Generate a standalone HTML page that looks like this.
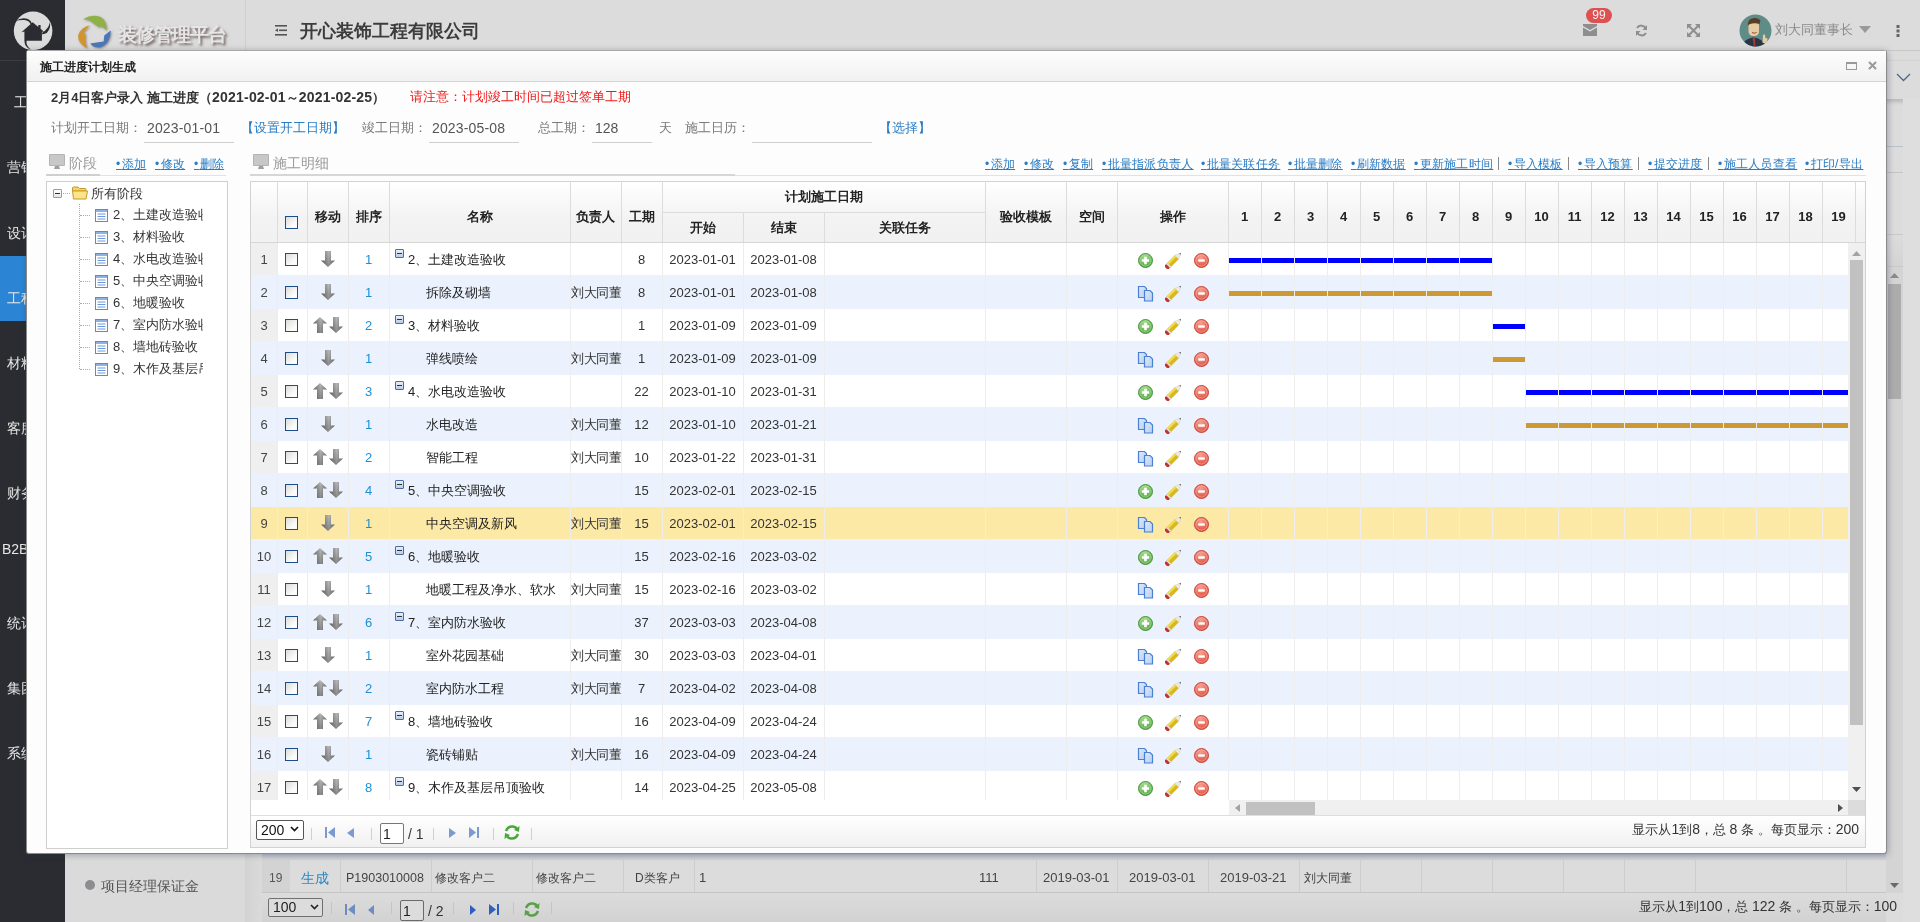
<!DOCTYPE html><html><head><meta charset="utf-8"><title>施工进度计划生成</title><style>
html,body{margin:0;padding:0;width:1920px;height:922px;overflow:hidden;background:#dcdcdc;font-family:"Liberation Sans", sans-serif;}
div{box-sizing:border-box;}
</style></head><body><div style="position:absolute;left:0;top:0;width:1920px;height:922px;overflow:hidden;will-change:transform">
<div style="position:absolute;left:0px;top:0px;width:65px;height:922px;background:#2a2c31;"></div>
<svg style="position:absolute;left:0;top:0" width="65" height="60" viewBox="0 0 65 60"><circle cx="33.1" cy="30.8" r="19.3" fill="#dcdcdc"/><path d="M15.2 21.2 Q22 16.5 28.5 19.2 Q31.5 20.8 32 24 L30.6 24.2 Q29 20.6 24.5 20 Q19.5 19.6 15.2 21.2 Z" fill="#2a2c31"/><path d="M32.7 22.3 L38.3 26.9 L38.3 25 L40.6 25 L40.6 28.8 L44 31.8 L41.9 31.8 L41.9 40.8 L26.6 40.8 Q25.6 45.5 30.8 49.6 Q24.6 47.6 24.4 40.8 L24.4 31.6 L21.4 32.2 Z" fill="#2a2c31"/><path d="M42.6 32.2 Q48 29.5 50 22.2 Q51 28 47 32.8 Q44.5 34.6 41.9 34.2 Z" fill="#2a2c31"/></svg>
<div style="position:absolute;left:0px;top:60px;width:65px;height:1px;background:#3b3d42;"></div>
<div style="position:absolute;left:0px;top:256px;width:65px;height:65px;background:#2b84d4;"></div>
<div style="position:absolute;left:4px;top:94.0px;width:61px;text-align:center;height:16px;line-height:16px;font-size:14px;color:#e6e6e6;font-weight:normal;white-space:nowrap;">工作台</div>
<div style="position:absolute;left:4px;top:159.0px;width:61px;text-align:center;height:16px;line-height:16px;font-size:14px;color:#e6e6e6;font-weight:normal;white-space:nowrap;">营销中心</div>
<div style="position:absolute;left:4px;top:225.0px;width:61px;text-align:center;height:16px;line-height:16px;font-size:14px;color:#e6e6e6;font-weight:normal;white-space:nowrap;">设计中心</div>
<div style="position:absolute;left:4px;top:290.0px;width:61px;text-align:center;height:16px;line-height:16px;font-size:14px;color:#e6e6e6;font-weight:normal;white-space:nowrap;">工程中心</div>
<div style="position:absolute;left:4px;top:355.0px;width:61px;text-align:center;height:16px;line-height:16px;font-size:14px;color:#e6e6e6;font-weight:normal;white-space:nowrap;">材料中心</div>
<div style="position:absolute;left:4px;top:420.0px;width:61px;text-align:center;height:16px;line-height:16px;font-size:14px;color:#e6e6e6;font-weight:normal;white-space:nowrap;">客服中心</div>
<div style="position:absolute;left:4px;top:485.0px;width:61px;text-align:center;height:16px;line-height:16px;font-size:14px;color:#e6e6e6;font-weight:normal;white-space:nowrap;">财务中心</div>
<div style="position:absolute;left:2px;top:541.0px;height:16px;line-height:16px;font-size:14px;color:#e6e6e6;font-weight:normal;white-space:nowrap;">B2B商城</div>
<div style="position:absolute;left:4px;top:615.0px;width:61px;text-align:center;height:16px;line-height:16px;font-size:14px;color:#e6e6e6;font-weight:normal;white-space:nowrap;">统计分析</div>
<div style="position:absolute;left:4px;top:680.0px;width:61px;text-align:center;height:16px;line-height:16px;font-size:14px;color:#e6e6e6;font-weight:normal;white-space:nowrap;">集团管理</div>
<div style="position:absolute;left:4px;top:745.0px;width:61px;text-align:center;height:16px;line-height:16px;font-size:14px;color:#e6e6e6;font-weight:normal;white-space:nowrap;">系统设置</div>
<div style="position:absolute;left:65px;top:0px;width:1855px;height:51px;background:#dcdcdc;"></div>
<div style="position:absolute;left:245px;top:0px;width:1px;height:51px;background:#cfcfcf;"></div>
<svg style="position:absolute;left:0;top:0;filter:drop-shadow(1px 1px 1px rgba(100,80,80,0.55))" width="120" height="52" viewBox="0 0 120 52"><path d="M83 19.2 Q92 13.8 100.5 17 Q106.8 20.5 106.6 30.4 Q104.5 28 102.5 27.2 L100 25.8 L99.6 27.6 L93.5 23.6 L90.8 21 Q87 19.4 83 19.2 Z" fill="#8fb246"/><path d="M89.7 25.2 Q80.5 27.5 78.3 35 Q77 43 87.3 48.2 Q85.2 44 85.4 38 L85.6 33.6 L82.6 33.4 Z" fill="#d1952f"/><path d="M90.2 43.6 Q93.5 48.2 100.5 47.4 Q110.2 44.5 111 30.6 Q107.6 32.8 104.3 35.6 L103.6 41.6 Q97 42.6 90.2 43.6 Z" fill="#4a78b6"/></svg>
<div style="position:absolute;left:118px;top:23px;height:24px;line-height:24px;font-size:19px;font-weight:bold;color:#e6e6e6;text-shadow:1.5px 2px 2.5px rgba(105,85,85,0.9);white-space:nowrap;letter-spacing:-1px">装修管理平台</div>
<svg style="position:absolute;left:275px;top:25px" width="13" height="11" viewBox="0 0 13 11"><rect x="0" y="0" width="12" height="1.6" fill="#555"/><rect x="4" y="4.5" width="8" height="1.6" fill="#555"/><rect x="0" y="9" width="12" height="1.6" fill="#555"/><path d="M0 5.3 L3 3.5 L3 7 Z" fill="#555"/></svg>
<div style="position:absolute;left:300px;top:19px;height:24px;line-height:24px;font-size:18px;font-weight:bold;color:#3c3c3c;white-space:nowrap">开心装饰工程有限公司</div>
<svg style="position:absolute;left:1583px;top:24px" width="14" height="12" viewBox="0 0 14 12"><path d="M0 0 H14 V2 L7 6 L0 2 Z" fill="#8e8e8e"/><path d="M0 3.5 L7 7.5 L14 3.5 V12 H0 Z" fill="#8e8e8e"/></svg>
<div style="position:absolute;left:1586px;top:8px;width:26px;height:15px;border-radius:8px;background:#dc5252;color:#f2f2f2;font-size:12px;line-height:15px;text-align:center">99</div>
<svg style="position:absolute;left:1635px;top:24px" width="13" height="13" viewBox="0 0 13 13"><path d="M11 5 A5 5 0 0 0 2 4" stroke="#8e8e8e" stroke-width="2" fill="none"/><path d="M12 1 L12 6 L7.5 6 Z" fill="#8e8e8e"/><path d="M2 8 A5 5 0 0 0 11 9" stroke="#8e8e8e" stroke-width="2" fill="none"/><path d="M1 12 L1 7 L5.5 7 Z" fill="#8e8e8e"/></svg>
<svg style="position:absolute;left:1687px;top:24px" width="13" height="13" viewBox="0 0 13 13"><path d="M1 1 L12 12 M12 1 L1 12" stroke="#8e8e8e" stroke-width="2"/><path d="M0 0 H5 L0 5 Z M13 0 H8 L13 5 Z M0 13 H5 L0 8 Z M13 13 H8 L13 8 Z" fill="#8e8e8e"/></svg>
<svg style="position:absolute;left:1739px;top:14px" width="33" height="33" viewBox="0 0 33 33"><defs><clipPath id="avc"><circle cx="16.5" cy="16.5" r="16"/></clipPath></defs><circle cx="16.5" cy="16.5" r="16" fill="#5f8c87"/><g clip-path="url(#avc)"><path d="M3 33 Q4 25 14 23.5 Q24 24 27 33 Z" fill="#2c3546"/><path d="M13.5 23.5 L15 33 L16.5 33 L15.8 23.5 Z" fill="#a83a30"/><rect x="9.5" y="7" width="10.5" height="15" rx="4.5" fill="#e6cca4"/><path d="M8.8 12 Q8.5 5 14 4.2 Q19 3.2 21.5 6.5 L20.5 10 Q15 8.5 10 10.5 Z" fill="#5a3b24"/><path d="M13 18.5 Q15 20 17.5 18.5" stroke="#a04040" stroke-width="1" fill="none"/><path d="M23.5 29 L24 21.5 Q25 19.5 26 21 L26.5 24 L28.5 24.5 L28 29 Z" fill="#e6cca4"/></g></svg>
<div style="position:absolute;left:1775px;top:21px;height:18px;line-height:18px;font-size:13px;color:#8a8a8a;white-space:nowrap">刘大同董事长</div>
<svg style="position:absolute;left:1859px;top:26px" width="12" height="7" viewBox="0 0 12 7"><path d="M0 0 H12 L6 7 Z" fill="#9a9a9a"/></svg>
<svg style="position:absolute;left:1896px;top:25px" width="4" height="12" viewBox="0 0 4 12"><rect x="0.5" y="0" width="3" height="3" fill="#666"/><rect x="0.5" y="4.5" width="3" height="3" fill="#666"/><rect x="0.5" y="9" width="3" height="3" fill="#666"/></svg>
<div style="position:absolute;left:65px;top:50px;width:1855px;height:1px;background:#c8c8c8;"></div>
<div style="position:absolute;left:1880px;top:60px;width:40px;height:39px;background:#dcdcdc;box-shadow:0 3px 4px rgba(0,0,0,0.16);border-top:1px solid #d2d2d2;"></div>
<svg style="position:absolute;left:1896px;top:73px" width="15" height="9" viewBox="0 0 15 9"><path d="M1 1 L7.5 7.5 L14 1" stroke="#4a6a8a" stroke-width="1.3" fill="none"/></svg>
<div style="position:absolute;left:1885px;top:146px;width:18px;height:1px;background:#b7c3cc;"></div>
<div style="position:absolute;left:1885px;top:172px;width:18px;height:1px;background:#c4c4c4;"></div>
<div style="position:absolute;left:1885px;top:234px;width:19px;height:33px;border:1px solid #c9c9c9;background:linear-gradient(#dcdcdc,#d4d4d4);"></div>
<div style="position:absolute;left:1886px;top:267px;width:17px;height:626px;background:#d4d4d4;"></div>
<div style="position:absolute;left:1888px;top:284px;width:13px;height:115px;background:#acacac;"></div>
<svg style="position:absolute;left:1890px;top:273px" width="9" height="5"><path d="M0 5 L4.5 0 L9 5 Z" fill="#8a8a8a"/></svg>
<svg style="position:absolute;left:1890px;top:883px" width="9" height="5"><path d="M0 0 L4.5 5 L9 0 Z" fill="#6a6a6a"/></svg>
<div style="position:absolute;left:1903px;top:99px;width:17px;height:823px;background:#dedede;"></div>
<div style="position:absolute;left:65px;top:854px;width:180px;height:68px;background:#dadada;"></div>
<div style="position:absolute;left:85px;top:880px;width:10px;height:10px;border-radius:5px;background:#8b8d90"></div>
<div style="position:absolute;left:101px;top:878.0px;height:16px;line-height:16px;font-size:14px;color:#555;font-weight:normal;white-space:nowrap;">项目经理保证金</div>
<div style="position:absolute;left:245px;top:853px;width:17px;height:69px;background:linear-gradient(90deg,#d2d2d2,#dadada);"></div>
<div style="position:absolute;left:262px;top:853px;width:1624px;height:39px;background:#dcdcdc;"></div>
<div style="position:absolute;left:262px;top:853px;width:1624px;height:7px;background:linear-gradient(#b9bfcb,#d3d5da);"></div>
<div style="position:absolute;left:262px;top:860px;width:28px;height:32px;background:#d3d3d3;"></div>
<div style="position:absolute;left:340px;top:860px;width:1px;height:32px;background:#cdcdcd;"></div>
<div style="position:absolute;left:431px;top:860px;width:1px;height:32px;background:#cdcdcd;"></div>
<div style="position:absolute;left:532px;top:860px;width:1px;height:32px;background:#cdcdcd;"></div>
<div style="position:absolute;left:623px;top:860px;width:1px;height:32px;background:#cdcdcd;"></div>
<div style="position:absolute;left:694px;top:860px;width:1px;height:32px;background:#cdcdcd;"></div>
<div style="position:absolute;left:1036px;top:860px;width:1px;height:32px;background:#cdcdcd;"></div>
<div style="position:absolute;left:1117px;top:860px;width:1px;height:32px;background:#cdcdcd;"></div>
<div style="position:absolute;left:1208px;top:860px;width:1px;height:32px;background:#cdcdcd;"></div>
<div style="position:absolute;left:1299px;top:860px;width:1px;height:32px;background:#cdcdcd;"></div>
<div style="position:absolute;left:1360px;top:860px;width:1px;height:32px;background:#cdcdcd;"></div>
<div style="position:absolute;left:1421px;top:860px;width:1px;height:32px;background:#cdcdcd;"></div>
<div style="position:absolute;left:1492px;top:860px;width:1px;height:32px;background:#cdcdcd;"></div>
<div style="position:absolute;left:1563px;top:860px;width:1px;height:32px;background:#cdcdcd;"></div>
<div style="position:absolute;left:1624px;top:860px;width:1px;height:32px;background:#cdcdcd;"></div>
<div style="position:absolute;left:1695px;top:860px;width:1px;height:32px;background:#cdcdcd;"></div>
<div style="position:absolute;left:1846px;top:860px;width:1px;height:32px;background:#cdcdcd;"></div>
<div style="position:absolute;left:262px;top:892px;width:1624px;height:1px;background:#c4c4c4;"></div>
<div style="position:absolute;left:262px;top:893px;width:1624px;height:29px;background:linear-gradient(#dcdcdc,#d2d2d2);"></div>
<div style="position:absolute;left:269px;top:870.0px;height:16px;line-height:16px;font-size:12px;color:#555;font-weight:normal;white-space:nowrap;">19</div>
<div style="position:absolute;left:301px;top:870.0px;height:16px;line-height:16px;font-size:14px;color:#2a8ac0;font-weight:normal;white-space:nowrap;">生成</div>
<div style="position:absolute;left:346px;top:870.0px;height:16px;line-height:16px;font-size:12.5px;color:#444;font-weight:normal;white-space:nowrap;">P1903010008</div>
<div style="position:absolute;left:435px;top:870.0px;height:16px;line-height:16px;font-size:12px;color:#444;font-weight:normal;white-space:nowrap;">修改客户二</div>
<div style="position:absolute;left:536px;top:870.0px;height:16px;line-height:16px;font-size:12px;color:#444;font-weight:normal;white-space:nowrap;">修改客户二</div>
<div style="position:absolute;left:635px;top:870.0px;height:16px;line-height:16px;font-size:12px;color:#444;font-weight:normal;white-space:nowrap;">D类客户</div>
<div style="position:absolute;left:699px;top:870.0px;height:16px;line-height:16px;font-size:13px;color:#444;font-weight:normal;white-space:nowrap;">1</div>
<div style="position:absolute;left:979px;top:870.0px;height:16px;line-height:16px;font-size:13px;color:#444;font-weight:normal;white-space:nowrap;">111</div>
<div style="position:absolute;left:1043px;top:870.0px;height:16px;line-height:16px;font-size:13px;color:#444;font-weight:normal;white-space:nowrap;">2019-03-01</div>
<div style="position:absolute;left:1129px;top:870.0px;height:16px;line-height:16px;font-size:13px;color:#444;font-weight:normal;white-space:nowrap;">2019-03-01</div>
<div style="position:absolute;left:1220px;top:870.0px;height:16px;line-height:16px;font-size:13px;color:#444;font-weight:normal;white-space:nowrap;">2019-03-21</div>
<div style="position:absolute;left:1304px;top:870.0px;height:16px;line-height:16px;font-size:12px;color:#444;font-weight:normal;white-space:nowrap;">刘大同董</div>
<div style="position:absolute;left:268px;top:898px;width:55px;height:19px;border:1px solid #707070;border-radius:2px;background:#dcdcdc;font-size:14px;line-height:17px;padding-left:4px;color:#222">100</div>
<svg style="position:absolute;left:310px;top:904px" width="9" height="6"><path d="M1 1 L4.5 4.5 L8 1" stroke="#222" stroke-width="1.6" fill="none"/></svg>
<div style="position:absolute;right:23px;top:898.0px;height:16px;line-height:16px;font-size:13px;color:#333;font-weight:normal;white-space:nowrap;">显示从<span style="font-size:14px">1</span>到<span style="font-size:14px">100</span>，总 <span style="font-size:14px">122</span> 条 。每页显示：<span style="font-size:14px">100</span></div>
<div style="position:absolute;left:331px;top:902px;width:1px;height:12px;background:#c4c4c4;"></div>
<div style="position:absolute;left:391px;top:902px;width:1px;height:12px;background:#c4c4c4;"></div>
<div style="position:absolute;left:453px;top:902px;width:1px;height:12px;background:#c4c4c4;"></div>
<div style="position:absolute;left:513px;top:902px;width:1px;height:12px;background:#c4c4c4;"></div>
<div style="position:absolute;left:551px;top:902px;width:1px;height:12px;background:#c4c4c4;"></div>
<svg style="position:absolute;left:345px;top:904px" width="10" height="11"><rect x="0" y="0" width="2" height="11" fill="#6f8cc0"/><path d="M10 0 V11 L3 5.5 Z" fill="#6f8cc0"/></svg>
<svg style="position:absolute;left:368px;top:905px" width="6" height="10"><path d="M6 0 V10 L0 5 Z" fill="#6f8cc0"/></svg>
<div style="position:absolute;left:400px;top:900px;width:24px;height:21px;border:1px solid #6a6a6a;border-radius:2px;background:#dcdcdc;font-size:14px;line-height:21px;padding-left:2px;color:#222">1</div>
<div style="position:absolute;left:428px;top:903.0px;height:16px;line-height:16px;font-size:14px;color:#333;font-weight:normal;white-space:nowrap;">/ 2</div>
<svg style="position:absolute;left:470px;top:905px" width="6" height="10"><path d="M0 0 V10 L6 5 Z" fill="#2e5fc0"/></svg>
<svg style="position:absolute;left:489px;top:904px" width="10" height="11"><path d="M0 0 V11 L7 5.5 Z" fill="#2e5fc0"/><rect x="8" y="0" width="2" height="11" fill="#2e5fc0"/></svg>
<svg style="position:absolute;left:524px;top:902px" width="16" height="15" viewBox="0 0 16 15"><path d="M2 6 Q4 1 9 1.5 Q12 2 13 4" stroke="#5aa048" stroke-width="2.6" fill="none"/><path d="M15.5 1 L15 7 L10 5 Z" fill="#5aa048"/><path d="M14 9 Q12 14 7 13.5 Q4 13 3 11" stroke="#5aa048" stroke-width="2.6" fill="none"/><path d="M0.5 14 L1 8 L6 10 Z" fill="#5aa048"/></svg>
<div style="position:absolute;left:26px;top:50px;width:1861px;height:804px;background:#fdfdfd;border:1px solid #8a8a8a;border-top-color:#a8a8a8;border-radius:3px;box-shadow:1px 1px 6px rgba(40,50,80,0.35);"></div>
<div style="position:absolute;left:27px;top:51px;width:1859px;height:30px;background:linear-gradient(#fdfdfd,#f1f1f1);"></div>
<div style="position:absolute;left:27px;top:81px;width:1859px;height:1px;background:#d4d4d4;"></div>
<div style="position:absolute;left:40px;top:59.0px;height:16px;line-height:16px;font-size:12px;color:#222;font-weight:bold;white-space:nowrap;">施工进度计划生成</div>
<div style="position:absolute;left:1846px;top:62px;width:11px;height:8px;border:1px solid #999;border-top-width:2px;"></div>
<svg style="position:absolute;left:1868px;top:61px" width="9" height="9"><path d="M1.5 1.5 L7.5 7.5 M7.5 1.5 L1.5 7.5" stroke="#999" stroke-width="2" stroke-linecap="round"/></svg>
<div style="position:absolute;left:51px;top:89.0px;height:16px;line-height:16px;font-size:13px;color:#333;font-weight:bold;white-space:nowrap;">2月4日客户录入 施工进度（<span style="font-size:14px;letter-spacing:0.2px">2021-02-01</span>～<span style="font-size:14px;letter-spacing:0.2px">2021-02-25</span>）</div>
<div style="position:absolute;left:410px;top:89.0px;height:16px;line-height:16px;font-size:13px;color:#f21818;font-weight:normal;white-space:nowrap;">请注意：计划竣工时间已超过签单工期</div>
<div style="position:absolute;left:51px;top:120.0px;height:16px;line-height:16px;font-size:13px;color:#7a7a7a;font-weight:normal;white-space:nowrap;">计划开工日期：</div>
<div style="position:absolute;left:147px;top:120.0px;height:16px;line-height:16px;font-size:14px;color:#555;font-weight:normal;white-space:nowrap;letter-spacing:0.15px">2023-01-01</div>
<div style="position:absolute;left:144px;top:142px;width:90px;height:1px;background:#cfcfcf;"></div>
<div style="position:absolute;left:241px;top:120.0px;height:16px;line-height:16px;font-size:13px;color:#2a7cc4;font-weight:normal;white-space:nowrap;">【设置开工日期】</div>
<div style="position:absolute;left:362px;top:120.0px;height:16px;line-height:16px;font-size:13px;color:#7a7a7a;font-weight:normal;white-space:nowrap;">竣工日期：</div>
<div style="position:absolute;left:432px;top:120.0px;height:16px;line-height:16px;font-size:14px;color:#555;font-weight:normal;white-space:nowrap;letter-spacing:0.15px">2023-05-08</div>
<div style="position:absolute;left:429px;top:142px;width:90px;height:1px;background:#cfcfcf;"></div>
<div style="position:absolute;left:538px;top:120.0px;height:16px;line-height:16px;font-size:13px;color:#7a7a7a;font-weight:normal;white-space:nowrap;">总工期：</div>
<div style="position:absolute;left:595px;top:120.0px;height:16px;line-height:16px;font-size:14px;color:#555;font-weight:normal;white-space:nowrap;">128</div>
<div style="position:absolute;left:592px;top:142px;width:60px;height:1px;background:#cfcfcf;"></div>
<div style="position:absolute;left:659px;top:120.0px;height:16px;line-height:16px;font-size:13px;color:#7a7a7a;font-weight:normal;white-space:nowrap;">天</div>
<div style="position:absolute;left:685px;top:120.0px;height:16px;line-height:16px;font-size:13px;color:#7a7a7a;font-weight:normal;white-space:nowrap;">施工日历：</div>
<div style="position:absolute;left:752px;top:142px;width:120px;height:1px;background:#cfcfcf;"></div>
<div style="position:absolute;left:879px;top:120.0px;height:16px;line-height:16px;font-size:13px;color:#2a7cc4;font-weight:normal;white-space:nowrap;">【选择】</div>
<svg style="position:absolute;left:49px;top:154px" width="16" height="16" viewBox="0 0 16 16"><rect x="0" y="0" width="16" height="12" rx="1" fill="#b4b4b4"/><rect x="1" y="1" width="14" height="10" fill="#c8c8c8"/><path d="M6 12 H10 L11 15 H5 Z" fill="#a0a0a0"/></svg>
<div style="position:absolute;left:69px;top:155.0px;height:16px;line-height:16px;font-size:14px;color:#999;font-weight:normal;white-space:nowrap;">阶段</div>
<div style="position:absolute;left:116px;top:156px;height:16px;line-height:16px;font-size:12px;color:#2a7cc4;white-space:nowrap;text-decoration:underline;letter-spacing:0.3px"><span style="letter-spacing:1.3px">•</span>添加</div>
<div style="position:absolute;left:155px;top:156px;height:16px;line-height:16px;font-size:12px;color:#2a7cc4;white-space:nowrap;text-decoration:underline;letter-spacing:0.3px"><span style="letter-spacing:1.3px">•</span>修改</div>
<div style="position:absolute;left:194px;top:156px;height:16px;line-height:16px;font-size:12px;color:#2a7cc4;white-space:nowrap;text-decoration:underline;letter-spacing:0.3px"><span style="letter-spacing:1.3px">•</span>删除</div>
<div style="position:absolute;left:46px;top:174px;width:54px;height:2px;background:#cfcfcf;"></div>
<div style="position:absolute;left:100px;top:175px;width:126px;height:1px;background:#e2e2e2;"></div>
<svg style="position:absolute;left:253px;top:154px" width="16" height="16" viewBox="0 0 16 16"><rect x="0" y="0" width="16" height="12" rx="1" fill="#b4b4b4"/><rect x="1" y="1" width="14" height="10" fill="#c8c8c8"/><path d="M6 12 H10 L11 15 H5 Z" fill="#a0a0a0"/></svg>
<div style="position:absolute;left:273px;top:155.0px;height:16px;line-height:16px;font-size:14px;color:#999;font-weight:normal;white-space:nowrap;">施工明细</div>
<div style="position:absolute;left:250px;top:174px;width:485px;height:2px;background:#d6d6d6;"></div>
<div style="position:absolute;left:735px;top:175px;width:1131px;height:1px;background:#e2e2e2;"></div>
<div style="position:absolute;left:985px;top:156px;height:16px;line-height:16px;font-size:12px;color:#2a7cc4;white-space:nowrap;text-decoration:underline;letter-spacing:0.3px"><span style="letter-spacing:1.3px">•</span>添加</div>
<div style="position:absolute;left:1024px;top:156px;height:16px;line-height:16px;font-size:12px;color:#2a7cc4;white-space:nowrap;text-decoration:underline;letter-spacing:0.3px"><span style="letter-spacing:1.3px">•</span>修改</div>
<div style="position:absolute;left:1063px;top:156px;height:16px;line-height:16px;font-size:12px;color:#2a7cc4;white-space:nowrap;text-decoration:underline;letter-spacing:0.3px"><span style="letter-spacing:1.3px">•</span>复制</div>
<div style="position:absolute;left:1102px;top:156px;height:16px;line-height:16px;font-size:12px;color:#2a7cc4;white-space:nowrap;text-decoration:underline;letter-spacing:0.3px"><span style="letter-spacing:1.3px">•</span>批量指派负责人</div>
<div style="position:absolute;left:1201px;top:156px;height:16px;line-height:16px;font-size:12px;color:#2a7cc4;white-space:nowrap;text-decoration:underline;letter-spacing:0.3px"><span style="letter-spacing:1.3px">•</span>批量关联任务</div>
<div style="position:absolute;left:1288px;top:156px;height:16px;line-height:16px;font-size:12px;color:#2a7cc4;white-space:nowrap;text-decoration:underline;letter-spacing:0.3px"><span style="letter-spacing:1.3px">•</span>批量删除</div>
<div style="position:absolute;left:1351px;top:156px;height:16px;line-height:16px;font-size:12px;color:#2a7cc4;white-space:nowrap;text-decoration:underline;letter-spacing:0.3px"><span style="letter-spacing:1.3px">•</span>刷新数据</div>
<div style="position:absolute;left:1414px;top:156px;height:16px;line-height:16px;font-size:12px;color:#2a7cc4;white-space:nowrap;text-decoration:underline;letter-spacing:0.3px"><span style="letter-spacing:1.3px">•</span>更新施工时间</div>
<div style="position:absolute;left:1508px;top:156px;height:16px;line-height:16px;font-size:12px;color:#2a7cc4;white-space:nowrap;text-decoration:underline;letter-spacing:0.3px"><span style="letter-spacing:1.3px">•</span>导入模板</div>
<div style="position:absolute;left:1578px;top:156px;height:16px;line-height:16px;font-size:12px;color:#2a7cc4;white-space:nowrap;text-decoration:underline;letter-spacing:0.3px"><span style="letter-spacing:1.3px">•</span>导入预算</div>
<div style="position:absolute;left:1648px;top:156px;height:16px;line-height:16px;font-size:12px;color:#2a7cc4;white-space:nowrap;text-decoration:underline;letter-spacing:0.3px"><span style="letter-spacing:1.3px">•</span>提交进度</div>
<div style="position:absolute;left:1718px;top:156px;height:16px;line-height:16px;font-size:12px;color:#2a7cc4;white-space:nowrap;text-decoration:underline;letter-spacing:0.3px"><span style="letter-spacing:1.3px">•</span>施工人员查看</div>
<div style="position:absolute;left:1805px;top:156px;height:16px;line-height:16px;font-size:12px;color:#2a7cc4;white-space:nowrap;text-decoration:underline;letter-spacing:0.3px"><span style="letter-spacing:1.3px">•</span>打印/导出</div>
<div style="position:absolute;left:1498px;top:157px;width:1px;height:13px;background:#888;"></div>
<div style="position:absolute;left:1568px;top:157px;width:1px;height:13px;background:#888;"></div>
<div style="position:absolute;left:1638px;top:157px;width:1px;height:13px;background:#888;"></div>
<div style="position:absolute;left:1708px;top:157px;width:1px;height:13px;background:#888;"></div>
<div style="position:absolute;left:46px;top:181px;width:182px;height:668px;border:1px solid #cfcfcf;background:#fff;"></div>
<div style="position:absolute;left:53px;top:189px;width:9px;height:9px;border:1px solid #9a9a9a;border-radius:1px;background:linear-gradient(#fff,#e6e6e6)"><div style="position:absolute;left:1px;top:3px;width:5px;height:1px;background:#333"></div></div>
<div style="position:absolute;left:63px;top:193px;width:7px;border-top:1px dotted #aaa"></div>
<svg style="position:absolute;left:72px;top:186px" width="16" height="14" viewBox="0 0 16 14"><path d="M0.5 2 Q0.5 1 1.5 1 H6 L7.5 2.5 H13 Q14 2.5 14 3.5 V5 H0.5 Z" fill="#f3d46a" stroke="#c89a2a" stroke-width="1"/><path d="M0.5 5 H15.5 L14 13 H1.5 Z" fill="#fbe48a" stroke="#c89a2a" stroke-width="1"/></svg>
<div style="position:absolute;left:91px;top:186.0px;height:16px;line-height:16px;font-size:13px;color:#333;font-weight:normal;white-space:nowrap;">所有阶段</div>
<div style="position:absolute;left:79px;top:204px;height:165px;border-left:1px dotted #aaa"></div>
<div style="position:absolute;left:80px;top:215px;width:10px;border-top:1px dotted #aaa"></div>
<svg style="position:absolute;left:95px;top:209px" width="13" height="13" viewBox="0 0 13 13"><rect x="0.5" y="0.5" width="12" height="12" fill="#fff" stroke="#5a8ad0"/><rect x="1" y="1" width="11" height="2" fill="#8fb2e4"/><path d="M2.5 5 H10.5 M2.5 7.5 H10.5 M2.5 10 H10.5" stroke="#6a98d8" stroke-width="1"/></svg>
<div style="position:absolute;left:113px;top:207px;width:90px;overflow:hidden;height:16px;line-height:16px;font-size:13px;color:#333;white-space:nowrap">2、土建改造验收</div>
<div style="position:absolute;left:80px;top:237px;width:10px;border-top:1px dotted #aaa"></div>
<svg style="position:absolute;left:95px;top:231px" width="13" height="13" viewBox="0 0 13 13"><rect x="0.5" y="0.5" width="12" height="12" fill="#fff" stroke="#5a8ad0"/><rect x="1" y="1" width="11" height="2" fill="#8fb2e4"/><path d="M2.5 5 H10.5 M2.5 7.5 H10.5 M2.5 10 H10.5" stroke="#6a98d8" stroke-width="1"/></svg>
<div style="position:absolute;left:113px;top:229px;width:90px;overflow:hidden;height:16px;line-height:16px;font-size:13px;color:#333;white-space:nowrap">3、材料验收</div>
<div style="position:absolute;left:80px;top:259px;width:10px;border-top:1px dotted #aaa"></div>
<svg style="position:absolute;left:95px;top:253px" width="13" height="13" viewBox="0 0 13 13"><rect x="0.5" y="0.5" width="12" height="12" fill="#fff" stroke="#5a8ad0"/><rect x="1" y="1" width="11" height="2" fill="#8fb2e4"/><path d="M2.5 5 H10.5 M2.5 7.5 H10.5 M2.5 10 H10.5" stroke="#6a98d8" stroke-width="1"/></svg>
<div style="position:absolute;left:113px;top:251px;width:90px;overflow:hidden;height:16px;line-height:16px;font-size:13px;color:#333;white-space:nowrap">4、水电改造验收</div>
<div style="position:absolute;left:80px;top:281px;width:10px;border-top:1px dotted #aaa"></div>
<svg style="position:absolute;left:95px;top:275px" width="13" height="13" viewBox="0 0 13 13"><rect x="0.5" y="0.5" width="12" height="12" fill="#fff" stroke="#5a8ad0"/><rect x="1" y="1" width="11" height="2" fill="#8fb2e4"/><path d="M2.5 5 H10.5 M2.5 7.5 H10.5 M2.5 10 H10.5" stroke="#6a98d8" stroke-width="1"/></svg>
<div style="position:absolute;left:113px;top:273px;width:90px;overflow:hidden;height:16px;line-height:16px;font-size:13px;color:#333;white-space:nowrap">5、中央空调验收</div>
<div style="position:absolute;left:80px;top:303px;width:10px;border-top:1px dotted #aaa"></div>
<svg style="position:absolute;left:95px;top:297px" width="13" height="13" viewBox="0 0 13 13"><rect x="0.5" y="0.5" width="12" height="12" fill="#fff" stroke="#5a8ad0"/><rect x="1" y="1" width="11" height="2" fill="#8fb2e4"/><path d="M2.5 5 H10.5 M2.5 7.5 H10.5 M2.5 10 H10.5" stroke="#6a98d8" stroke-width="1"/></svg>
<div style="position:absolute;left:113px;top:295px;width:90px;overflow:hidden;height:16px;line-height:16px;font-size:13px;color:#333;white-space:nowrap">6、地暖验收</div>
<div style="position:absolute;left:80px;top:325px;width:10px;border-top:1px dotted #aaa"></div>
<svg style="position:absolute;left:95px;top:319px" width="13" height="13" viewBox="0 0 13 13"><rect x="0.5" y="0.5" width="12" height="12" fill="#fff" stroke="#5a8ad0"/><rect x="1" y="1" width="11" height="2" fill="#8fb2e4"/><path d="M2.5 5 H10.5 M2.5 7.5 H10.5 M2.5 10 H10.5" stroke="#6a98d8" stroke-width="1"/></svg>
<div style="position:absolute;left:113px;top:317px;width:90px;overflow:hidden;height:16px;line-height:16px;font-size:13px;color:#333;white-space:nowrap">7、室内防水验收</div>
<div style="position:absolute;left:80px;top:347px;width:10px;border-top:1px dotted #aaa"></div>
<svg style="position:absolute;left:95px;top:341px" width="13" height="13" viewBox="0 0 13 13"><rect x="0.5" y="0.5" width="12" height="12" fill="#fff" stroke="#5a8ad0"/><rect x="1" y="1" width="11" height="2" fill="#8fb2e4"/><path d="M2.5 5 H10.5 M2.5 7.5 H10.5 M2.5 10 H10.5" stroke="#6a98d8" stroke-width="1"/></svg>
<div style="position:absolute;left:113px;top:339px;width:90px;overflow:hidden;height:16px;line-height:16px;font-size:13px;color:#333;white-space:nowrap">8、墙地砖验收</div>
<div style="position:absolute;left:80px;top:369px;width:10px;border-top:1px dotted #aaa"></div>
<svg style="position:absolute;left:95px;top:363px" width="13" height="13" viewBox="0 0 13 13"><rect x="0.5" y="0.5" width="12" height="12" fill="#fff" stroke="#5a8ad0"/><rect x="1" y="1" width="11" height="2" fill="#8fb2e4"/><path d="M2.5 5 H10.5 M2.5 7.5 H10.5 M2.5 10 H10.5" stroke="#6a98d8" stroke-width="1"/></svg>
<div style="position:absolute;left:113px;top:361px;width:90px;overflow:hidden;height:16px;line-height:16px;font-size:13px;color:#333;white-space:nowrap">9、木作及基层吊顶验收</div>
<div style="position:absolute;left:250px;top:181px;width:1616px;height:667px;border:1px solid #d2d2d2;background:#fff;"></div>
<div style="position:absolute;left:251px;top:182px;width:1614px;height:60px;background:linear-gradient(#ffffff 0%,#f3f3f3 60%,#f1f1f1 100%);"></div>
<div style="position:absolute;left:277px;top:182px;width:1px;height:60px;background:#dcdcdc;"></div>
<div style="position:absolute;left:307px;top:182px;width:1px;height:60px;background:#dcdcdc;"></div>
<div style="position:absolute;left:348px;top:182px;width:1px;height:60px;background:#dcdcdc;"></div>
<div style="position:absolute;left:389px;top:182px;width:1px;height:60px;background:#dcdcdc;"></div>
<div style="position:absolute;left:570px;top:182px;width:1px;height:60px;background:#dcdcdc;"></div>
<div style="position:absolute;left:621px;top:182px;width:1px;height:60px;background:#dcdcdc;"></div>
<div style="position:absolute;left:662px;top:182px;width:1px;height:60px;background:#dcdcdc;"></div>
<div style="position:absolute;left:743px;top:212px;width:1px;height:30px;background:#dcdcdc;"></div>
<div style="position:absolute;left:824px;top:212px;width:1px;height:30px;background:#dcdcdc;"></div>
<div style="position:absolute;left:985px;top:182px;width:1px;height:60px;background:#dcdcdc;"></div>
<div style="position:absolute;left:1066px;top:182px;width:1px;height:60px;background:#dcdcdc;"></div>
<div style="position:absolute;left:1117px;top:182px;width:1px;height:60px;background:#dcdcdc;"></div>
<div style="position:absolute;left:1228px;top:182px;width:1px;height:60px;background:#dcdcdc;"></div>
<div style="position:absolute;left:1261px;top:182px;width:1px;height:60px;background:#dcdcdc;"></div>
<div style="position:absolute;left:1294px;top:182px;width:1px;height:60px;background:#dcdcdc;"></div>
<div style="position:absolute;left:1327px;top:182px;width:1px;height:60px;background:#dcdcdc;"></div>
<div style="position:absolute;left:1360px;top:182px;width:1px;height:60px;background:#dcdcdc;"></div>
<div style="position:absolute;left:1393px;top:182px;width:1px;height:60px;background:#dcdcdc;"></div>
<div style="position:absolute;left:1426px;top:182px;width:1px;height:60px;background:#dcdcdc;"></div>
<div style="position:absolute;left:1459px;top:182px;width:1px;height:60px;background:#dcdcdc;"></div>
<div style="position:absolute;left:1492px;top:182px;width:1px;height:60px;background:#dcdcdc;"></div>
<div style="position:absolute;left:1525px;top:182px;width:1px;height:60px;background:#dcdcdc;"></div>
<div style="position:absolute;left:1558px;top:182px;width:1px;height:60px;background:#dcdcdc;"></div>
<div style="position:absolute;left:1591px;top:182px;width:1px;height:60px;background:#dcdcdc;"></div>
<div style="position:absolute;left:1624px;top:182px;width:1px;height:60px;background:#dcdcdc;"></div>
<div style="position:absolute;left:1657px;top:182px;width:1px;height:60px;background:#dcdcdc;"></div>
<div style="position:absolute;left:1690px;top:182px;width:1px;height:60px;background:#dcdcdc;"></div>
<div style="position:absolute;left:1723px;top:182px;width:1px;height:60px;background:#dcdcdc;"></div>
<div style="position:absolute;left:1756px;top:182px;width:1px;height:60px;background:#dcdcdc;"></div>
<div style="position:absolute;left:1789px;top:182px;width:1px;height:60px;background:#dcdcdc;"></div>
<div style="position:absolute;left:1822px;top:182px;width:1px;height:60px;background:#dcdcdc;"></div>
<div style="position:absolute;left:1855px;top:182px;width:1px;height:60px;background:#dcdcdc;"></div>
<div style="position:absolute;left:662px;top:212px;width:323px;height:1px;background:#dcdcdc;"></div>
<div style="position:absolute;left:251px;top:242px;width:1614px;height:1px;background:#d6d6d6;"></div>
<div style="position:absolute;left:307px;top:209.0px;width:41px;text-align:center;height:16px;line-height:16px;font-size:13px;color:#222;font-weight:bold;white-space:nowrap;">移动</div>
<div style="position:absolute;left:348px;top:209.0px;width:41px;text-align:center;height:16px;line-height:16px;font-size:13px;color:#222;font-weight:bold;white-space:nowrap;">排序</div>
<div style="position:absolute;left:389px;top:209.0px;width:181px;text-align:center;height:16px;line-height:16px;font-size:13px;color:#222;font-weight:bold;white-space:nowrap;">名称</div>
<div style="position:absolute;left:570px;top:209.0px;width:51px;text-align:center;height:16px;line-height:16px;font-size:13px;color:#222;font-weight:bold;white-space:nowrap;">负责人</div>
<div style="position:absolute;left:621px;top:209.0px;width:41px;text-align:center;height:16px;line-height:16px;font-size:13px;color:#222;font-weight:bold;white-space:nowrap;">工期</div>
<div style="position:absolute;left:662px;top:189.0px;width:323px;text-align:center;height:16px;line-height:16px;font-size:13px;color:#222;font-weight:bold;white-space:nowrap;">计划施工日期</div>
<div style="position:absolute;left:662px;top:220.0px;width:81px;text-align:center;height:16px;line-height:16px;font-size:13px;color:#222;font-weight:bold;white-space:nowrap;">开始</div>
<div style="position:absolute;left:743px;top:220.0px;width:81px;text-align:center;height:16px;line-height:16px;font-size:13px;color:#222;font-weight:bold;white-space:nowrap;">结束</div>
<div style="position:absolute;left:824px;top:220.0px;width:161px;text-align:center;height:16px;line-height:16px;font-size:13px;color:#222;font-weight:bold;white-space:nowrap;">关联任务</div>
<div style="position:absolute;left:985px;top:209.0px;width:81px;text-align:center;height:16px;line-height:16px;font-size:13px;color:#222;font-weight:bold;white-space:nowrap;">验收模板</div>
<div style="position:absolute;left:1066px;top:209.0px;width:51px;text-align:center;height:16px;line-height:16px;font-size:13px;color:#222;font-weight:bold;white-space:nowrap;">空间</div>
<div style="position:absolute;left:1117px;top:209.0px;width:111px;text-align:center;height:16px;line-height:16px;font-size:13px;color:#222;font-weight:bold;white-space:nowrap;">操作</div>
<div style="position:absolute;left:1228px;top:209.0px;width:33px;text-align:center;height:16px;line-height:16px;font-size:13px;color:#222;font-weight:bold;white-space:nowrap;">1</div>
<div style="position:absolute;left:1261px;top:209.0px;width:33px;text-align:center;height:16px;line-height:16px;font-size:13px;color:#222;font-weight:bold;white-space:nowrap;">2</div>
<div style="position:absolute;left:1294px;top:209.0px;width:33px;text-align:center;height:16px;line-height:16px;font-size:13px;color:#222;font-weight:bold;white-space:nowrap;">3</div>
<div style="position:absolute;left:1327px;top:209.0px;width:33px;text-align:center;height:16px;line-height:16px;font-size:13px;color:#222;font-weight:bold;white-space:nowrap;">4</div>
<div style="position:absolute;left:1360px;top:209.0px;width:33px;text-align:center;height:16px;line-height:16px;font-size:13px;color:#222;font-weight:bold;white-space:nowrap;">5</div>
<div style="position:absolute;left:1393px;top:209.0px;width:33px;text-align:center;height:16px;line-height:16px;font-size:13px;color:#222;font-weight:bold;white-space:nowrap;">6</div>
<div style="position:absolute;left:1426px;top:209.0px;width:33px;text-align:center;height:16px;line-height:16px;font-size:13px;color:#222;font-weight:bold;white-space:nowrap;">7</div>
<div style="position:absolute;left:1459px;top:209.0px;width:33px;text-align:center;height:16px;line-height:16px;font-size:13px;color:#222;font-weight:bold;white-space:nowrap;">8</div>
<div style="position:absolute;left:1492px;top:209.0px;width:33px;text-align:center;height:16px;line-height:16px;font-size:13px;color:#222;font-weight:bold;white-space:nowrap;">9</div>
<div style="position:absolute;left:1525px;top:209.0px;width:33px;text-align:center;height:16px;line-height:16px;font-size:13px;color:#222;font-weight:bold;white-space:nowrap;">10</div>
<div style="position:absolute;left:1558px;top:209.0px;width:33px;text-align:center;height:16px;line-height:16px;font-size:13px;color:#222;font-weight:bold;white-space:nowrap;">11</div>
<div style="position:absolute;left:1591px;top:209.0px;width:33px;text-align:center;height:16px;line-height:16px;font-size:13px;color:#222;font-weight:bold;white-space:nowrap;">12</div>
<div style="position:absolute;left:1624px;top:209.0px;width:33px;text-align:center;height:16px;line-height:16px;font-size:13px;color:#222;font-weight:bold;white-space:nowrap;">13</div>
<div style="position:absolute;left:1657px;top:209.0px;width:33px;text-align:center;height:16px;line-height:16px;font-size:13px;color:#222;font-weight:bold;white-space:nowrap;">14</div>
<div style="position:absolute;left:1690px;top:209.0px;width:33px;text-align:center;height:16px;line-height:16px;font-size:13px;color:#222;font-weight:bold;white-space:nowrap;">15</div>
<div style="position:absolute;left:1723px;top:209.0px;width:33px;text-align:center;height:16px;line-height:16px;font-size:13px;color:#222;font-weight:bold;white-space:nowrap;">16</div>
<div style="position:absolute;left:1756px;top:209.0px;width:33px;text-align:center;height:16px;line-height:16px;font-size:13px;color:#222;font-weight:bold;white-space:nowrap;">17</div>
<div style="position:absolute;left:1789px;top:209.0px;width:33px;text-align:center;height:16px;line-height:16px;font-size:13px;color:#222;font-weight:bold;white-space:nowrap;">18</div>
<div style="position:absolute;left:1822px;top:209.0px;width:33px;text-align:center;height:16px;line-height:16px;font-size:13px;color:#222;font-weight:bold;white-space:nowrap;">19</div>
<div style="position:absolute;left:1856px;top:182px;width:9px;height:60px;overflow:hidden"><div style="position:absolute;left:0;top:51px;width:33px;text-align:center;height:16px;line-height:16px;font-size:13px;font-weight:bold;color:#222">20</div></div>
<div style="position:absolute;left:285px;top:216px;width:13px;height:13px;border:1px solid #1c4f8a;background:linear-gradient(135deg,#dcdcd8,#fbfbfb 70%)"></div>
<div style="position:absolute;left:251px;top:243px;width:1597px;height:557px;overflow:hidden">
<div style="position:absolute;left:0px;top:0px;width:1597px;height:32px;background:#ffffff;"></div>
<div style="position:absolute;left:0px;top:0px;width:27px;height:32px;background:#efefef;"></div>
<div style="position:absolute;left:0px;top:32px;width:1597px;height:1px;background:#ebf2fd;"></div>
<div style="position:absolute;left:0px;top:9px;width:26px;text-align:center;height:16px;line-height:16px;font-size:13px;color:#444;white-space:nowrap;">1</div>
<div style="position:absolute;left:34px;top:10px;width:13px;height:13px;border:1px solid #1c4f8a;background:linear-gradient(135deg,#dcdcd8,#fbfbfb 70%)"></div>
<svg width="0" height="0" style="position:absolute"><defs><linearGradient id="agx" x1="0" x2="1" y1="0" y2="0"><stop offset="0" stop-color="#6e6e6e"/><stop offset="0.55" stop-color="#b8b8b8"/><stop offset="1" stop-color="#7a7a7a"/></linearGradient><linearGradient id="agy" x1="0" x2="0" y1="0" y2="1"><stop offset="0" stop-color="#000" stop-opacity="0"/><stop offset="1" stop-color="#000" stop-opacity="0.25"/></linearGradient></defs></svg>
<svg style="position:absolute;left:70px;top:8px" width="14" height="16" viewBox="0 0 14 16"><path d="M4 0 H10 V9.5 H14 L7 16 L0 9.5 H4 Z" fill="url(#agx)"/><path d="M4 0 H10 V9.5 H14 L7 16 L0 9.5 H4 Z" fill="url(#agy)"/></svg>
<div style="position:absolute;left:97px;top:9px;width:41px;text-align:center;height:16px;line-height:16px;font-size:13px;color:#1e8fd6;white-space:nowrap;">1</div>
<div style="position:absolute;left:144px;top:6px;width:9px;height:9px;border:1px solid #4a6aa0;border-radius:1px;background:linear-gradient(#e8f0fb,#b8cbe6)"><div style="position:absolute;left:1px;top:3px;width:5px;height:1px;background:#333"></div></div>
<div style="position:absolute;left:157px;top:9px;height:16px;line-height:16px;font-size:13px;color:#222;white-space:nowrap;">2、土建改造验收</div>
<div style="position:absolute;left:370px;top:9px;width:41px;text-align:center;height:16px;line-height:16px;font-size:13px;color:#333;white-space:nowrap;">8</div>
<div style="position:absolute;left:411px;top:9px;width:81px;text-align:center;height:16px;line-height:16px;font-size:13px;color:#333;white-space:nowrap;">2023-01-01</div>
<div style="position:absolute;left:492px;top:9px;width:81px;text-align:center;height:16px;line-height:16px;font-size:13px;color:#333;white-space:nowrap;">2023-01-08</div>
<svg style="position:absolute;left:886.5px;top:9.5px" width="15" height="15" viewBox="0 0 15 15"><defs><radialGradient id="ga260" cx="0.45" cy="0.3" r="0.75"><stop offset="0" stop-color="#a8dc90"/><stop offset="1" stop-color="#4aa23a"/></radialGradient></defs><circle cx="7.5" cy="7.5" r="7" fill="url(#ga260)" stroke="#3c8c30" stroke-width="0.9"/><circle cx="7.5" cy="7.5" r="5.6" fill="none" stroke="#c8eebc" stroke-width="0.6" opacity="0.8"/><path d="M7.5 3.8 V11.2 M3.8 7.5 H11.2" stroke="#fff" stroke-width="2.6"/></svg>
<svg style="position:absolute;left:914px;top:9px" width="17" height="17" viewBox="0 0 16 16"><g transform="translate(8,8) rotate(-45)"><rect x="-10" y="-2.6" width="3.2" height="5.2" rx="1.6" fill="#c8302a"/><rect x="-7.2" y="-2.6" width="1.6" height="5.2" fill="#e6e6e6" stroke="#999" stroke-width="0.3"/><rect x="-5.6" y="-2.6" width="10" height="5.2" fill="#d8b820"/><rect x="-5.6" y="-2.6" width="10" height="2" fill="#f0dc50"/><path d="M4.4 -2.6 L8.4 -0.8 L8.4 0.8 L4.4 2.6 Z" fill="#f2eadc" stroke="#bbb" stroke-width="0.3"/><path d="M8.4 -0.8 L10 0 L8.4 0.8 Z" fill="#444"/></g></svg>
<svg style="position:absolute;left:942.5px;top:9.5px" width="15" height="15" viewBox="0 0 15 15"><defs><radialGradient id="gr260" cx="0.45" cy="0.3" r="0.75"><stop offset="0" stop-color="#f8a090"/><stop offset="1" stop-color="#de4636"/></radialGradient></defs><circle cx="7.5" cy="7.5" r="7" fill="url(#gr260)" stroke="#c43a2c" stroke-width="0.9"/><circle cx="7.5" cy="7.5" r="5.6" fill="none" stroke="#fbd0c8" stroke-width="0.6" opacity="0.8"/><path d="M4.2 7.5 H10.8" stroke="#fff" stroke-width="2.4"/></svg>
<div style="position:absolute;left:978px;top:15px;width:32px;height:5px;background:#0000ff;"></div>
<div style="position:absolute;left:1011px;top:15px;width:32px;height:5px;background:#0000ff;"></div>
<div style="position:absolute;left:1044px;top:15px;width:32px;height:5px;background:#0000ff;"></div>
<div style="position:absolute;left:1077px;top:15px;width:32px;height:5px;background:#0000ff;"></div>
<div style="position:absolute;left:1110px;top:15px;width:32px;height:5px;background:#0000ff;"></div>
<div style="position:absolute;left:1143px;top:15px;width:32px;height:5px;background:#0000ff;"></div>
<div style="position:absolute;left:1176px;top:15px;width:32px;height:5px;background:#0000ff;"></div>
<div style="position:absolute;left:1209px;top:15px;width:32px;height:5px;background:#0000ff;"></div>
<div style="position:absolute;left:0px;top:33px;width:1597px;height:32px;background:#ebf2fd;"></div>
<div style="position:absolute;left:0px;top:33px;width:27px;height:32px;background:#ebf2fd;"></div>
<div style="position:absolute;left:0px;top:65px;width:1597px;height:1px;background:#ebf2fd;"></div>
<div style="position:absolute;left:0px;top:42px;width:26px;text-align:center;height:16px;line-height:16px;font-size:13px;color:#444;white-space:nowrap;">2</div>
<div style="position:absolute;left:34px;top:43px;width:13px;height:13px;border:1px solid #1c4f8a;background:linear-gradient(135deg,#dcdcd8,#fbfbfb 70%)"></div>
<svg style="position:absolute;left:70px;top:41px" width="14" height="16" viewBox="0 0 14 16"><path d="M4 0 H10 V9.5 H14 L7 16 L0 9.5 H4 Z" fill="url(#agx)"/><path d="M4 0 H10 V9.5 H14 L7 16 L0 9.5 H4 Z" fill="url(#agy)"/></svg>
<div style="position:absolute;left:97px;top:42px;width:41px;text-align:center;height:16px;line-height:16px;font-size:13px;color:#1e8fd6;white-space:nowrap;">1</div>
<div style="position:absolute;left:175px;top:42px;height:16px;line-height:16px;font-size:13px;color:#222;white-space:nowrap;">拆除及砌墙</div>
<div style="position:absolute;left:320px;top:42px;height:16px;line-height:16px;font-size:13px;color:#333;white-space:nowrap;letter-spacing:-0.3px">刘大同董</div>
<div style="position:absolute;left:370px;top:42px;width:41px;text-align:center;height:16px;line-height:16px;font-size:13px;color:#333;white-space:nowrap;">8</div>
<div style="position:absolute;left:411px;top:42px;width:81px;text-align:center;height:16px;line-height:16px;font-size:13px;color:#333;white-space:nowrap;">2023-01-01</div>
<div style="position:absolute;left:492px;top:42px;width:81px;text-align:center;height:16px;line-height:16px;font-size:13px;color:#333;white-space:nowrap;">2023-01-08</div>
<svg style="position:absolute;left:886px;top:42px" width="17" height="17" viewBox="0 0 17 17"><defs><linearGradient id="gc293" x1="0" y1="0" x2="1" y2="1"><stop offset="0" stop-color="#dce9fa"/><stop offset="1" stop-color="#b8d0f0"/></linearGradient></defs><path d="M1.5 1.5 H7.5 L9.5 3.5 V12.5 H1.5 Z" fill="url(#gc293)" stroke="#4a7fd4" stroke-width="1.2"/><path d="M7.5 5.5 H13 L15.5 8 V16 H7.5 Z" fill="url(#gc293)" stroke="#4a7fd4" stroke-width="1.2"/></svg>
<svg style="position:absolute;left:914px;top:42px" width="17" height="17" viewBox="0 0 16 16"><g transform="translate(8,8) rotate(-45)"><rect x="-10" y="-2.6" width="3.2" height="5.2" rx="1.6" fill="#c8302a"/><rect x="-7.2" y="-2.6" width="1.6" height="5.2" fill="#e6e6e6" stroke="#999" stroke-width="0.3"/><rect x="-5.6" y="-2.6" width="10" height="5.2" fill="#d8b820"/><rect x="-5.6" y="-2.6" width="10" height="2" fill="#f0dc50"/><path d="M4.4 -2.6 L8.4 -0.8 L8.4 0.8 L4.4 2.6 Z" fill="#f2eadc" stroke="#bbb" stroke-width="0.3"/><path d="M8.4 -0.8 L10 0 L8.4 0.8 Z" fill="#444"/></g></svg>
<svg style="position:absolute;left:942.5px;top:42.5px" width="15" height="15" viewBox="0 0 15 15"><defs><radialGradient id="gr293" cx="0.45" cy="0.3" r="0.75"><stop offset="0" stop-color="#f8a090"/><stop offset="1" stop-color="#de4636"/></radialGradient></defs><circle cx="7.5" cy="7.5" r="7" fill="url(#gr293)" stroke="#c43a2c" stroke-width="0.9"/><circle cx="7.5" cy="7.5" r="5.6" fill="none" stroke="#fbd0c8" stroke-width="0.6" opacity="0.8"/><path d="M4.2 7.5 H10.8" stroke="#fff" stroke-width="2.4"/></svg>
<div style="position:absolute;left:978px;top:48px;width:32px;height:5px;background:#cc9933;"></div>
<div style="position:absolute;left:1011px;top:48px;width:32px;height:5px;background:#cc9933;"></div>
<div style="position:absolute;left:1044px;top:48px;width:32px;height:5px;background:#cc9933;"></div>
<div style="position:absolute;left:1077px;top:48px;width:32px;height:5px;background:#cc9933;"></div>
<div style="position:absolute;left:1110px;top:48px;width:32px;height:5px;background:#cc9933;"></div>
<div style="position:absolute;left:1143px;top:48px;width:32px;height:5px;background:#cc9933;"></div>
<div style="position:absolute;left:1176px;top:48px;width:32px;height:5px;background:#cc9933;"></div>
<div style="position:absolute;left:1209px;top:48px;width:32px;height:5px;background:#cc9933;"></div>
<div style="position:absolute;left:0px;top:66px;width:1597px;height:32px;background:#ffffff;"></div>
<div style="position:absolute;left:0px;top:66px;width:27px;height:32px;background:#efefef;"></div>
<div style="position:absolute;left:0px;top:98px;width:1597px;height:1px;background:#ebf2fd;"></div>
<div style="position:absolute;left:0px;top:75px;width:26px;text-align:center;height:16px;line-height:16px;font-size:13px;color:#444;white-space:nowrap;">3</div>
<div style="position:absolute;left:34px;top:76px;width:13px;height:13px;border:1px solid #1c4f8a;background:linear-gradient(135deg,#dcdcd8,#fbfbfb 70%)"></div>
<svg style="position:absolute;left:62px;top:74px" width="14" height="16" viewBox="0 0 14 16"><path d="M4 16 H10 V6.5 H14 L7 0 L0 6.5 H4 Z" fill="url(#agx)"/><path d="M4 16 H10 V6.5 H14 L7 0 L0 6.5 H4 Z" fill="url(#agy)"/></svg>
<svg style="position:absolute;left:78px;top:74px" width="14" height="16" viewBox="0 0 14 16"><path d="M4 0 H10 V9.5 H14 L7 16 L0 9.5 H4 Z" fill="url(#agx)"/><path d="M4 0 H10 V9.5 H14 L7 16 L0 9.5 H4 Z" fill="url(#agy)"/></svg>
<div style="position:absolute;left:97px;top:75px;width:41px;text-align:center;height:16px;line-height:16px;font-size:13px;color:#1e8fd6;white-space:nowrap;">2</div>
<div style="position:absolute;left:144px;top:72px;width:9px;height:9px;border:1px solid #4a6aa0;border-radius:1px;background:linear-gradient(#e8f0fb,#b8cbe6)"><div style="position:absolute;left:1px;top:3px;width:5px;height:1px;background:#333"></div></div>
<div style="position:absolute;left:157px;top:75px;height:16px;line-height:16px;font-size:13px;color:#222;white-space:nowrap;">3、材料验收</div>
<div style="position:absolute;left:370px;top:75px;width:41px;text-align:center;height:16px;line-height:16px;font-size:13px;color:#333;white-space:nowrap;">1</div>
<div style="position:absolute;left:411px;top:75px;width:81px;text-align:center;height:16px;line-height:16px;font-size:13px;color:#333;white-space:nowrap;">2023-01-09</div>
<div style="position:absolute;left:492px;top:75px;width:81px;text-align:center;height:16px;line-height:16px;font-size:13px;color:#333;white-space:nowrap;">2023-01-09</div>
<svg style="position:absolute;left:886.5px;top:75.5px" width="15" height="15" viewBox="0 0 15 15"><defs><radialGradient id="ga326" cx="0.45" cy="0.3" r="0.75"><stop offset="0" stop-color="#a8dc90"/><stop offset="1" stop-color="#4aa23a"/></radialGradient></defs><circle cx="7.5" cy="7.5" r="7" fill="url(#ga326)" stroke="#3c8c30" stroke-width="0.9"/><circle cx="7.5" cy="7.5" r="5.6" fill="none" stroke="#c8eebc" stroke-width="0.6" opacity="0.8"/><path d="M7.5 3.8 V11.2 M3.8 7.5 H11.2" stroke="#fff" stroke-width="2.6"/></svg>
<svg style="position:absolute;left:914px;top:75px" width="17" height="17" viewBox="0 0 16 16"><g transform="translate(8,8) rotate(-45)"><rect x="-10" y="-2.6" width="3.2" height="5.2" rx="1.6" fill="#c8302a"/><rect x="-7.2" y="-2.6" width="1.6" height="5.2" fill="#e6e6e6" stroke="#999" stroke-width="0.3"/><rect x="-5.6" y="-2.6" width="10" height="5.2" fill="#d8b820"/><rect x="-5.6" y="-2.6" width="10" height="2" fill="#f0dc50"/><path d="M4.4 -2.6 L8.4 -0.8 L8.4 0.8 L4.4 2.6 Z" fill="#f2eadc" stroke="#bbb" stroke-width="0.3"/><path d="M8.4 -0.8 L10 0 L8.4 0.8 Z" fill="#444"/></g></svg>
<svg style="position:absolute;left:942.5px;top:75.5px" width="15" height="15" viewBox="0 0 15 15"><defs><radialGradient id="gr326" cx="0.45" cy="0.3" r="0.75"><stop offset="0" stop-color="#f8a090"/><stop offset="1" stop-color="#de4636"/></radialGradient></defs><circle cx="7.5" cy="7.5" r="7" fill="url(#gr326)" stroke="#c43a2c" stroke-width="0.9"/><circle cx="7.5" cy="7.5" r="5.6" fill="none" stroke="#fbd0c8" stroke-width="0.6" opacity="0.8"/><path d="M4.2 7.5 H10.8" stroke="#fff" stroke-width="2.4"/></svg>
<div style="position:absolute;left:1242px;top:81px;width:32px;height:5px;background:#0000ff;"></div>
<div style="position:absolute;left:0px;top:99px;width:1597px;height:32px;background:#ebf2fd;"></div>
<div style="position:absolute;left:0px;top:99px;width:27px;height:32px;background:#ebf2fd;"></div>
<div style="position:absolute;left:0px;top:131px;width:1597px;height:1px;background:#ebf2fd;"></div>
<div style="position:absolute;left:0px;top:108px;width:26px;text-align:center;height:16px;line-height:16px;font-size:13px;color:#444;white-space:nowrap;">4</div>
<div style="position:absolute;left:34px;top:109px;width:13px;height:13px;border:1px solid #1c4f8a;background:linear-gradient(135deg,#dcdcd8,#fbfbfb 70%)"></div>
<svg style="position:absolute;left:70px;top:107px" width="14" height="16" viewBox="0 0 14 16"><path d="M4 0 H10 V9.5 H14 L7 16 L0 9.5 H4 Z" fill="url(#agx)"/><path d="M4 0 H10 V9.5 H14 L7 16 L0 9.5 H4 Z" fill="url(#agy)"/></svg>
<div style="position:absolute;left:97px;top:108px;width:41px;text-align:center;height:16px;line-height:16px;font-size:13px;color:#1e8fd6;white-space:nowrap;">1</div>
<div style="position:absolute;left:175px;top:108px;height:16px;line-height:16px;font-size:13px;color:#222;white-space:nowrap;">弹线喷绘</div>
<div style="position:absolute;left:320px;top:108px;height:16px;line-height:16px;font-size:13px;color:#333;white-space:nowrap;letter-spacing:-0.3px">刘大同董</div>
<div style="position:absolute;left:370px;top:108px;width:41px;text-align:center;height:16px;line-height:16px;font-size:13px;color:#333;white-space:nowrap;">1</div>
<div style="position:absolute;left:411px;top:108px;width:81px;text-align:center;height:16px;line-height:16px;font-size:13px;color:#333;white-space:nowrap;">2023-01-09</div>
<div style="position:absolute;left:492px;top:108px;width:81px;text-align:center;height:16px;line-height:16px;font-size:13px;color:#333;white-space:nowrap;">2023-01-09</div>
<svg style="position:absolute;left:886px;top:108px" width="17" height="17" viewBox="0 0 17 17"><defs><linearGradient id="gc359" x1="0" y1="0" x2="1" y2="1"><stop offset="0" stop-color="#dce9fa"/><stop offset="1" stop-color="#b8d0f0"/></linearGradient></defs><path d="M1.5 1.5 H7.5 L9.5 3.5 V12.5 H1.5 Z" fill="url(#gc359)" stroke="#4a7fd4" stroke-width="1.2"/><path d="M7.5 5.5 H13 L15.5 8 V16 H7.5 Z" fill="url(#gc359)" stroke="#4a7fd4" stroke-width="1.2"/></svg>
<svg style="position:absolute;left:914px;top:108px" width="17" height="17" viewBox="0 0 16 16"><g transform="translate(8,8) rotate(-45)"><rect x="-10" y="-2.6" width="3.2" height="5.2" rx="1.6" fill="#c8302a"/><rect x="-7.2" y="-2.6" width="1.6" height="5.2" fill="#e6e6e6" stroke="#999" stroke-width="0.3"/><rect x="-5.6" y="-2.6" width="10" height="5.2" fill="#d8b820"/><rect x="-5.6" y="-2.6" width="10" height="2" fill="#f0dc50"/><path d="M4.4 -2.6 L8.4 -0.8 L8.4 0.8 L4.4 2.6 Z" fill="#f2eadc" stroke="#bbb" stroke-width="0.3"/><path d="M8.4 -0.8 L10 0 L8.4 0.8 Z" fill="#444"/></g></svg>
<svg style="position:absolute;left:942.5px;top:108.5px" width="15" height="15" viewBox="0 0 15 15"><defs><radialGradient id="gr359" cx="0.45" cy="0.3" r="0.75"><stop offset="0" stop-color="#f8a090"/><stop offset="1" stop-color="#de4636"/></radialGradient></defs><circle cx="7.5" cy="7.5" r="7" fill="url(#gr359)" stroke="#c43a2c" stroke-width="0.9"/><circle cx="7.5" cy="7.5" r="5.6" fill="none" stroke="#fbd0c8" stroke-width="0.6" opacity="0.8"/><path d="M4.2 7.5 H10.8" stroke="#fff" stroke-width="2.4"/></svg>
<div style="position:absolute;left:1242px;top:114px;width:32px;height:5px;background:#cc9933;"></div>
<div style="position:absolute;left:0px;top:132px;width:1597px;height:32px;background:#ffffff;"></div>
<div style="position:absolute;left:0px;top:132px;width:27px;height:32px;background:#efefef;"></div>
<div style="position:absolute;left:0px;top:164px;width:1597px;height:1px;background:#ebf2fd;"></div>
<div style="position:absolute;left:0px;top:141px;width:26px;text-align:center;height:16px;line-height:16px;font-size:13px;color:#444;white-space:nowrap;">5</div>
<div style="position:absolute;left:34px;top:142px;width:13px;height:13px;border:1px solid #1c4f8a;background:linear-gradient(135deg,#dcdcd8,#fbfbfb 70%)"></div>
<svg style="position:absolute;left:62px;top:140px" width="14" height="16" viewBox="0 0 14 16"><path d="M4 16 H10 V6.5 H14 L7 0 L0 6.5 H4 Z" fill="url(#agx)"/><path d="M4 16 H10 V6.5 H14 L7 0 L0 6.5 H4 Z" fill="url(#agy)"/></svg>
<svg style="position:absolute;left:78px;top:140px" width="14" height="16" viewBox="0 0 14 16"><path d="M4 0 H10 V9.5 H14 L7 16 L0 9.5 H4 Z" fill="url(#agx)"/><path d="M4 0 H10 V9.5 H14 L7 16 L0 9.5 H4 Z" fill="url(#agy)"/></svg>
<div style="position:absolute;left:97px;top:141px;width:41px;text-align:center;height:16px;line-height:16px;font-size:13px;color:#1e8fd6;white-space:nowrap;">3</div>
<div style="position:absolute;left:144px;top:138px;width:9px;height:9px;border:1px solid #4a6aa0;border-radius:1px;background:linear-gradient(#e8f0fb,#b8cbe6)"><div style="position:absolute;left:1px;top:3px;width:5px;height:1px;background:#333"></div></div>
<div style="position:absolute;left:157px;top:141px;height:16px;line-height:16px;font-size:13px;color:#222;white-space:nowrap;">4、水电改造验收</div>
<div style="position:absolute;left:370px;top:141px;width:41px;text-align:center;height:16px;line-height:16px;font-size:13px;color:#333;white-space:nowrap;">22</div>
<div style="position:absolute;left:411px;top:141px;width:81px;text-align:center;height:16px;line-height:16px;font-size:13px;color:#333;white-space:nowrap;">2023-01-10</div>
<div style="position:absolute;left:492px;top:141px;width:81px;text-align:center;height:16px;line-height:16px;font-size:13px;color:#333;white-space:nowrap;">2023-01-31</div>
<svg style="position:absolute;left:886.5px;top:141.5px" width="15" height="15" viewBox="0 0 15 15"><defs><radialGradient id="ga392" cx="0.45" cy="0.3" r="0.75"><stop offset="0" stop-color="#a8dc90"/><stop offset="1" stop-color="#4aa23a"/></radialGradient></defs><circle cx="7.5" cy="7.5" r="7" fill="url(#ga392)" stroke="#3c8c30" stroke-width="0.9"/><circle cx="7.5" cy="7.5" r="5.6" fill="none" stroke="#c8eebc" stroke-width="0.6" opacity="0.8"/><path d="M7.5 3.8 V11.2 M3.8 7.5 H11.2" stroke="#fff" stroke-width="2.6"/></svg>
<svg style="position:absolute;left:914px;top:141px" width="17" height="17" viewBox="0 0 16 16"><g transform="translate(8,8) rotate(-45)"><rect x="-10" y="-2.6" width="3.2" height="5.2" rx="1.6" fill="#c8302a"/><rect x="-7.2" y="-2.6" width="1.6" height="5.2" fill="#e6e6e6" stroke="#999" stroke-width="0.3"/><rect x="-5.6" y="-2.6" width="10" height="5.2" fill="#d8b820"/><rect x="-5.6" y="-2.6" width="10" height="2" fill="#f0dc50"/><path d="M4.4 -2.6 L8.4 -0.8 L8.4 0.8 L4.4 2.6 Z" fill="#f2eadc" stroke="#bbb" stroke-width="0.3"/><path d="M8.4 -0.8 L10 0 L8.4 0.8 Z" fill="#444"/></g></svg>
<svg style="position:absolute;left:942.5px;top:141.5px" width="15" height="15" viewBox="0 0 15 15"><defs><radialGradient id="gr392" cx="0.45" cy="0.3" r="0.75"><stop offset="0" stop-color="#f8a090"/><stop offset="1" stop-color="#de4636"/></radialGradient></defs><circle cx="7.5" cy="7.5" r="7" fill="url(#gr392)" stroke="#c43a2c" stroke-width="0.9"/><circle cx="7.5" cy="7.5" r="5.6" fill="none" stroke="#fbd0c8" stroke-width="0.6" opacity="0.8"/><path d="M4.2 7.5 H10.8" stroke="#fff" stroke-width="2.4"/></svg>
<div style="position:absolute;left:1275px;top:147px;width:32px;height:5px;background:#0000ff;"></div>
<div style="position:absolute;left:1308px;top:147px;width:32px;height:5px;background:#0000ff;"></div>
<div style="position:absolute;left:1341px;top:147px;width:32px;height:5px;background:#0000ff;"></div>
<div style="position:absolute;left:1374px;top:147px;width:32px;height:5px;background:#0000ff;"></div>
<div style="position:absolute;left:1407px;top:147px;width:32px;height:5px;background:#0000ff;"></div>
<div style="position:absolute;left:1440px;top:147px;width:32px;height:5px;background:#0000ff;"></div>
<div style="position:absolute;left:1473px;top:147px;width:32px;height:5px;background:#0000ff;"></div>
<div style="position:absolute;left:1506px;top:147px;width:32px;height:5px;background:#0000ff;"></div>
<div style="position:absolute;left:1539px;top:147px;width:32px;height:5px;background:#0000ff;"></div>
<div style="position:absolute;left:1572px;top:147px;width:32px;height:5px;background:#0000ff;"></div>
<div style="position:absolute;left:1605px;top:147px;width:32px;height:5px;background:#0000ff;"></div>
<div style="position:absolute;left:0px;top:165px;width:1597px;height:32px;background:#ebf2fd;"></div>
<div style="position:absolute;left:0px;top:165px;width:27px;height:32px;background:#ebf2fd;"></div>
<div style="position:absolute;left:0px;top:197px;width:1597px;height:1px;background:#ebf2fd;"></div>
<div style="position:absolute;left:0px;top:174px;width:26px;text-align:center;height:16px;line-height:16px;font-size:13px;color:#444;white-space:nowrap;">6</div>
<div style="position:absolute;left:34px;top:175px;width:13px;height:13px;border:1px solid #1c4f8a;background:linear-gradient(135deg,#dcdcd8,#fbfbfb 70%)"></div>
<svg style="position:absolute;left:70px;top:173px" width="14" height="16" viewBox="0 0 14 16"><path d="M4 0 H10 V9.5 H14 L7 16 L0 9.5 H4 Z" fill="url(#agx)"/><path d="M4 0 H10 V9.5 H14 L7 16 L0 9.5 H4 Z" fill="url(#agy)"/></svg>
<div style="position:absolute;left:97px;top:174px;width:41px;text-align:center;height:16px;line-height:16px;font-size:13px;color:#1e8fd6;white-space:nowrap;">1</div>
<div style="position:absolute;left:175px;top:174px;height:16px;line-height:16px;font-size:13px;color:#222;white-space:nowrap;">水电改造</div>
<div style="position:absolute;left:320px;top:174px;height:16px;line-height:16px;font-size:13px;color:#333;white-space:nowrap;letter-spacing:-0.3px">刘大同董</div>
<div style="position:absolute;left:370px;top:174px;width:41px;text-align:center;height:16px;line-height:16px;font-size:13px;color:#333;white-space:nowrap;">12</div>
<div style="position:absolute;left:411px;top:174px;width:81px;text-align:center;height:16px;line-height:16px;font-size:13px;color:#333;white-space:nowrap;">2023-01-10</div>
<div style="position:absolute;left:492px;top:174px;width:81px;text-align:center;height:16px;line-height:16px;font-size:13px;color:#333;white-space:nowrap;">2023-01-21</div>
<svg style="position:absolute;left:886px;top:174px" width="17" height="17" viewBox="0 0 17 17"><defs><linearGradient id="gc425" x1="0" y1="0" x2="1" y2="1"><stop offset="0" stop-color="#dce9fa"/><stop offset="1" stop-color="#b8d0f0"/></linearGradient></defs><path d="M1.5 1.5 H7.5 L9.5 3.5 V12.5 H1.5 Z" fill="url(#gc425)" stroke="#4a7fd4" stroke-width="1.2"/><path d="M7.5 5.5 H13 L15.5 8 V16 H7.5 Z" fill="url(#gc425)" stroke="#4a7fd4" stroke-width="1.2"/></svg>
<svg style="position:absolute;left:914px;top:174px" width="17" height="17" viewBox="0 0 16 16"><g transform="translate(8,8) rotate(-45)"><rect x="-10" y="-2.6" width="3.2" height="5.2" rx="1.6" fill="#c8302a"/><rect x="-7.2" y="-2.6" width="1.6" height="5.2" fill="#e6e6e6" stroke="#999" stroke-width="0.3"/><rect x="-5.6" y="-2.6" width="10" height="5.2" fill="#d8b820"/><rect x="-5.6" y="-2.6" width="10" height="2" fill="#f0dc50"/><path d="M4.4 -2.6 L8.4 -0.8 L8.4 0.8 L4.4 2.6 Z" fill="#f2eadc" stroke="#bbb" stroke-width="0.3"/><path d="M8.4 -0.8 L10 0 L8.4 0.8 Z" fill="#444"/></g></svg>
<svg style="position:absolute;left:942.5px;top:174.5px" width="15" height="15" viewBox="0 0 15 15"><defs><radialGradient id="gr425" cx="0.45" cy="0.3" r="0.75"><stop offset="0" stop-color="#f8a090"/><stop offset="1" stop-color="#de4636"/></radialGradient></defs><circle cx="7.5" cy="7.5" r="7" fill="url(#gr425)" stroke="#c43a2c" stroke-width="0.9"/><circle cx="7.5" cy="7.5" r="5.6" fill="none" stroke="#fbd0c8" stroke-width="0.6" opacity="0.8"/><path d="M4.2 7.5 H10.8" stroke="#fff" stroke-width="2.4"/></svg>
<div style="position:absolute;left:1275px;top:180px;width:32px;height:5px;background:#cc9933;"></div>
<div style="position:absolute;left:1308px;top:180px;width:32px;height:5px;background:#cc9933;"></div>
<div style="position:absolute;left:1341px;top:180px;width:32px;height:5px;background:#cc9933;"></div>
<div style="position:absolute;left:1374px;top:180px;width:32px;height:5px;background:#cc9933;"></div>
<div style="position:absolute;left:1407px;top:180px;width:32px;height:5px;background:#cc9933;"></div>
<div style="position:absolute;left:1440px;top:180px;width:32px;height:5px;background:#cc9933;"></div>
<div style="position:absolute;left:1473px;top:180px;width:32px;height:5px;background:#cc9933;"></div>
<div style="position:absolute;left:1506px;top:180px;width:32px;height:5px;background:#cc9933;"></div>
<div style="position:absolute;left:1539px;top:180px;width:32px;height:5px;background:#cc9933;"></div>
<div style="position:absolute;left:1572px;top:180px;width:32px;height:5px;background:#cc9933;"></div>
<div style="position:absolute;left:1605px;top:180px;width:32px;height:5px;background:#cc9933;"></div>
<div style="position:absolute;left:0px;top:198px;width:1597px;height:32px;background:#ffffff;"></div>
<div style="position:absolute;left:0px;top:198px;width:27px;height:32px;background:#efefef;"></div>
<div style="position:absolute;left:0px;top:230px;width:1597px;height:1px;background:#ebf2fd;"></div>
<div style="position:absolute;left:0px;top:207px;width:26px;text-align:center;height:16px;line-height:16px;font-size:13px;color:#444;white-space:nowrap;">7</div>
<div style="position:absolute;left:34px;top:208px;width:13px;height:13px;border:1px solid #1c4f8a;background:linear-gradient(135deg,#dcdcd8,#fbfbfb 70%)"></div>
<svg style="position:absolute;left:62px;top:206px" width="14" height="16" viewBox="0 0 14 16"><path d="M4 16 H10 V6.5 H14 L7 0 L0 6.5 H4 Z" fill="url(#agx)"/><path d="M4 16 H10 V6.5 H14 L7 0 L0 6.5 H4 Z" fill="url(#agy)"/></svg>
<svg style="position:absolute;left:78px;top:206px" width="14" height="16" viewBox="0 0 14 16"><path d="M4 0 H10 V9.5 H14 L7 16 L0 9.5 H4 Z" fill="url(#agx)"/><path d="M4 0 H10 V9.5 H14 L7 16 L0 9.5 H4 Z" fill="url(#agy)"/></svg>
<div style="position:absolute;left:97px;top:207px;width:41px;text-align:center;height:16px;line-height:16px;font-size:13px;color:#1e8fd6;white-space:nowrap;">2</div>
<div style="position:absolute;left:175px;top:207px;height:16px;line-height:16px;font-size:13px;color:#222;white-space:nowrap;">智能工程</div>
<div style="position:absolute;left:320px;top:207px;height:16px;line-height:16px;font-size:13px;color:#333;white-space:nowrap;letter-spacing:-0.3px">刘大同董</div>
<div style="position:absolute;left:370px;top:207px;width:41px;text-align:center;height:16px;line-height:16px;font-size:13px;color:#333;white-space:nowrap;">10</div>
<div style="position:absolute;left:411px;top:207px;width:81px;text-align:center;height:16px;line-height:16px;font-size:13px;color:#333;white-space:nowrap;">2023-01-22</div>
<div style="position:absolute;left:492px;top:207px;width:81px;text-align:center;height:16px;line-height:16px;font-size:13px;color:#333;white-space:nowrap;">2023-01-31</div>
<svg style="position:absolute;left:886px;top:207px" width="17" height="17" viewBox="0 0 17 17"><defs><linearGradient id="gc458" x1="0" y1="0" x2="1" y2="1"><stop offset="0" stop-color="#dce9fa"/><stop offset="1" stop-color="#b8d0f0"/></linearGradient></defs><path d="M1.5 1.5 H7.5 L9.5 3.5 V12.5 H1.5 Z" fill="url(#gc458)" stroke="#4a7fd4" stroke-width="1.2"/><path d="M7.5 5.5 H13 L15.5 8 V16 H7.5 Z" fill="url(#gc458)" stroke="#4a7fd4" stroke-width="1.2"/></svg>
<svg style="position:absolute;left:914px;top:207px" width="17" height="17" viewBox="0 0 16 16"><g transform="translate(8,8) rotate(-45)"><rect x="-10" y="-2.6" width="3.2" height="5.2" rx="1.6" fill="#c8302a"/><rect x="-7.2" y="-2.6" width="1.6" height="5.2" fill="#e6e6e6" stroke="#999" stroke-width="0.3"/><rect x="-5.6" y="-2.6" width="10" height="5.2" fill="#d8b820"/><rect x="-5.6" y="-2.6" width="10" height="2" fill="#f0dc50"/><path d="M4.4 -2.6 L8.4 -0.8 L8.4 0.8 L4.4 2.6 Z" fill="#f2eadc" stroke="#bbb" stroke-width="0.3"/><path d="M8.4 -0.8 L10 0 L8.4 0.8 Z" fill="#444"/></g></svg>
<svg style="position:absolute;left:942.5px;top:207.5px" width="15" height="15" viewBox="0 0 15 15"><defs><radialGradient id="gr458" cx="0.45" cy="0.3" r="0.75"><stop offset="0" stop-color="#f8a090"/><stop offset="1" stop-color="#de4636"/></radialGradient></defs><circle cx="7.5" cy="7.5" r="7" fill="url(#gr458)" stroke="#c43a2c" stroke-width="0.9"/><circle cx="7.5" cy="7.5" r="5.6" fill="none" stroke="#fbd0c8" stroke-width="0.6" opacity="0.8"/><path d="M4.2 7.5 H10.8" stroke="#fff" stroke-width="2.4"/></svg>
<div style="position:absolute;left:0px;top:231px;width:1597px;height:32px;background:#ebf2fd;"></div>
<div style="position:absolute;left:0px;top:231px;width:27px;height:32px;background:#ebf2fd;"></div>
<div style="position:absolute;left:0px;top:263px;width:1597px;height:1px;background:#ebf2fd;"></div>
<div style="position:absolute;left:0px;top:240px;width:26px;text-align:center;height:16px;line-height:16px;font-size:13px;color:#444;white-space:nowrap;">8</div>
<div style="position:absolute;left:34px;top:241px;width:13px;height:13px;border:1px solid #1c4f8a;background:linear-gradient(135deg,#dcdcd8,#fbfbfb 70%)"></div>
<svg style="position:absolute;left:62px;top:239px" width="14" height="16" viewBox="0 0 14 16"><path d="M4 16 H10 V6.5 H14 L7 0 L0 6.5 H4 Z" fill="url(#agx)"/><path d="M4 16 H10 V6.5 H14 L7 0 L0 6.5 H4 Z" fill="url(#agy)"/></svg>
<svg style="position:absolute;left:78px;top:239px" width="14" height="16" viewBox="0 0 14 16"><path d="M4 0 H10 V9.5 H14 L7 16 L0 9.5 H4 Z" fill="url(#agx)"/><path d="M4 0 H10 V9.5 H14 L7 16 L0 9.5 H4 Z" fill="url(#agy)"/></svg>
<div style="position:absolute;left:97px;top:240px;width:41px;text-align:center;height:16px;line-height:16px;font-size:13px;color:#1e8fd6;white-space:nowrap;">4</div>
<div style="position:absolute;left:144px;top:237px;width:9px;height:9px;border:1px solid #4a6aa0;border-radius:1px;background:linear-gradient(#e8f0fb,#b8cbe6)"><div style="position:absolute;left:1px;top:3px;width:5px;height:1px;background:#333"></div></div>
<div style="position:absolute;left:157px;top:240px;height:16px;line-height:16px;font-size:13px;color:#222;white-space:nowrap;">5、中央空调验收</div>
<div style="position:absolute;left:370px;top:240px;width:41px;text-align:center;height:16px;line-height:16px;font-size:13px;color:#333;white-space:nowrap;">15</div>
<div style="position:absolute;left:411px;top:240px;width:81px;text-align:center;height:16px;line-height:16px;font-size:13px;color:#333;white-space:nowrap;">2023-02-01</div>
<div style="position:absolute;left:492px;top:240px;width:81px;text-align:center;height:16px;line-height:16px;font-size:13px;color:#333;white-space:nowrap;">2023-02-15</div>
<svg style="position:absolute;left:886.5px;top:240.5px" width="15" height="15" viewBox="0 0 15 15"><defs><radialGradient id="ga491" cx="0.45" cy="0.3" r="0.75"><stop offset="0" stop-color="#a8dc90"/><stop offset="1" stop-color="#4aa23a"/></radialGradient></defs><circle cx="7.5" cy="7.5" r="7" fill="url(#ga491)" stroke="#3c8c30" stroke-width="0.9"/><circle cx="7.5" cy="7.5" r="5.6" fill="none" stroke="#c8eebc" stroke-width="0.6" opacity="0.8"/><path d="M7.5 3.8 V11.2 M3.8 7.5 H11.2" stroke="#fff" stroke-width="2.6"/></svg>
<svg style="position:absolute;left:914px;top:240px" width="17" height="17" viewBox="0 0 16 16"><g transform="translate(8,8) rotate(-45)"><rect x="-10" y="-2.6" width="3.2" height="5.2" rx="1.6" fill="#c8302a"/><rect x="-7.2" y="-2.6" width="1.6" height="5.2" fill="#e6e6e6" stroke="#999" stroke-width="0.3"/><rect x="-5.6" y="-2.6" width="10" height="5.2" fill="#d8b820"/><rect x="-5.6" y="-2.6" width="10" height="2" fill="#f0dc50"/><path d="M4.4 -2.6 L8.4 -0.8 L8.4 0.8 L4.4 2.6 Z" fill="#f2eadc" stroke="#bbb" stroke-width="0.3"/><path d="M8.4 -0.8 L10 0 L8.4 0.8 Z" fill="#444"/></g></svg>
<svg style="position:absolute;left:942.5px;top:240.5px" width="15" height="15" viewBox="0 0 15 15"><defs><radialGradient id="gr491" cx="0.45" cy="0.3" r="0.75"><stop offset="0" stop-color="#f8a090"/><stop offset="1" stop-color="#de4636"/></radialGradient></defs><circle cx="7.5" cy="7.5" r="7" fill="url(#gr491)" stroke="#c43a2c" stroke-width="0.9"/><circle cx="7.5" cy="7.5" r="5.6" fill="none" stroke="#fbd0c8" stroke-width="0.6" opacity="0.8"/><path d="M4.2 7.5 H10.8" stroke="#fff" stroke-width="2.4"/></svg>
<div style="position:absolute;left:0px;top:264px;width:1597px;height:32px;background:#fde9a6;"></div>
<div style="position:absolute;left:0px;top:264px;width:27px;height:32px;background:#fde9a6;"></div>
<div style="position:absolute;left:0px;top:296px;width:1597px;height:1px;background:#ebf2fd;"></div>
<div style="position:absolute;left:0px;top:273px;width:26px;text-align:center;height:16px;line-height:16px;font-size:13px;color:#444;white-space:nowrap;">9</div>
<div style="position:absolute;left:34px;top:274px;width:13px;height:13px;border:1px solid #1c4f8a;background:linear-gradient(135deg,#dcdcd8,#fbfbfb 70%)"></div>
<svg style="position:absolute;left:70px;top:272px" width="14" height="16" viewBox="0 0 14 16"><path d="M4 0 H10 V9.5 H14 L7 16 L0 9.5 H4 Z" fill="url(#agx)"/><path d="M4 0 H10 V9.5 H14 L7 16 L0 9.5 H4 Z" fill="url(#agy)"/></svg>
<div style="position:absolute;left:97px;top:273px;width:41px;text-align:center;height:16px;line-height:16px;font-size:13px;color:#1e8fd6;white-space:nowrap;">1</div>
<div style="position:absolute;left:175px;top:273px;height:16px;line-height:16px;font-size:13px;color:#222;white-space:nowrap;">中央空调及新风</div>
<div style="position:absolute;left:320px;top:273px;height:16px;line-height:16px;font-size:13px;color:#333;white-space:nowrap;letter-spacing:-0.3px">刘大同董</div>
<div style="position:absolute;left:370px;top:273px;width:41px;text-align:center;height:16px;line-height:16px;font-size:13px;color:#333;white-space:nowrap;">15</div>
<div style="position:absolute;left:411px;top:273px;width:81px;text-align:center;height:16px;line-height:16px;font-size:13px;color:#333;white-space:nowrap;">2023-02-01</div>
<div style="position:absolute;left:492px;top:273px;width:81px;text-align:center;height:16px;line-height:16px;font-size:13px;color:#333;white-space:nowrap;">2023-02-15</div>
<svg style="position:absolute;left:886px;top:273px" width="17" height="17" viewBox="0 0 17 17"><defs><linearGradient id="gc524" x1="0" y1="0" x2="1" y2="1"><stop offset="0" stop-color="#dce9fa"/><stop offset="1" stop-color="#b8d0f0"/></linearGradient></defs><path d="M1.5 1.5 H7.5 L9.5 3.5 V12.5 H1.5 Z" fill="url(#gc524)" stroke="#4a7fd4" stroke-width="1.2"/><path d="M7.5 5.5 H13 L15.5 8 V16 H7.5 Z" fill="url(#gc524)" stroke="#4a7fd4" stroke-width="1.2"/></svg>
<svg style="position:absolute;left:914px;top:273px" width="17" height="17" viewBox="0 0 16 16"><g transform="translate(8,8) rotate(-45)"><rect x="-10" y="-2.6" width="3.2" height="5.2" rx="1.6" fill="#c8302a"/><rect x="-7.2" y="-2.6" width="1.6" height="5.2" fill="#e6e6e6" stroke="#999" stroke-width="0.3"/><rect x="-5.6" y="-2.6" width="10" height="5.2" fill="#d8b820"/><rect x="-5.6" y="-2.6" width="10" height="2" fill="#f0dc50"/><path d="M4.4 -2.6 L8.4 -0.8 L8.4 0.8 L4.4 2.6 Z" fill="#f2eadc" stroke="#bbb" stroke-width="0.3"/><path d="M8.4 -0.8 L10 0 L8.4 0.8 Z" fill="#444"/></g></svg>
<svg style="position:absolute;left:942.5px;top:273.5px" width="15" height="15" viewBox="0 0 15 15"><defs><radialGradient id="gr524" cx="0.45" cy="0.3" r="0.75"><stop offset="0" stop-color="#f8a090"/><stop offset="1" stop-color="#de4636"/></radialGradient></defs><circle cx="7.5" cy="7.5" r="7" fill="url(#gr524)" stroke="#c43a2c" stroke-width="0.9"/><circle cx="7.5" cy="7.5" r="5.6" fill="none" stroke="#fbd0c8" stroke-width="0.6" opacity="0.8"/><path d="M4.2 7.5 H10.8" stroke="#fff" stroke-width="2.4"/></svg>
<div style="position:absolute;left:0px;top:297px;width:1597px;height:32px;background:#ebf2fd;"></div>
<div style="position:absolute;left:0px;top:297px;width:27px;height:32px;background:#ebf2fd;"></div>
<div style="position:absolute;left:0px;top:329px;width:1597px;height:1px;background:#ebf2fd;"></div>
<div style="position:absolute;left:0px;top:306px;width:26px;text-align:center;height:16px;line-height:16px;font-size:13px;color:#444;white-space:nowrap;">10</div>
<div style="position:absolute;left:34px;top:307px;width:13px;height:13px;border:1px solid #1c4f8a;background:linear-gradient(135deg,#dcdcd8,#fbfbfb 70%)"></div>
<svg style="position:absolute;left:62px;top:305px" width="14" height="16" viewBox="0 0 14 16"><path d="M4 16 H10 V6.5 H14 L7 0 L0 6.5 H4 Z" fill="url(#agx)"/><path d="M4 16 H10 V6.5 H14 L7 0 L0 6.5 H4 Z" fill="url(#agy)"/></svg>
<svg style="position:absolute;left:78px;top:305px" width="14" height="16" viewBox="0 0 14 16"><path d="M4 0 H10 V9.5 H14 L7 16 L0 9.5 H4 Z" fill="url(#agx)"/><path d="M4 0 H10 V9.5 H14 L7 16 L0 9.5 H4 Z" fill="url(#agy)"/></svg>
<div style="position:absolute;left:97px;top:306px;width:41px;text-align:center;height:16px;line-height:16px;font-size:13px;color:#1e8fd6;white-space:nowrap;">5</div>
<div style="position:absolute;left:144px;top:303px;width:9px;height:9px;border:1px solid #4a6aa0;border-radius:1px;background:linear-gradient(#e8f0fb,#b8cbe6)"><div style="position:absolute;left:1px;top:3px;width:5px;height:1px;background:#333"></div></div>
<div style="position:absolute;left:157px;top:306px;height:16px;line-height:16px;font-size:13px;color:#222;white-space:nowrap;">6、地暖验收</div>
<div style="position:absolute;left:370px;top:306px;width:41px;text-align:center;height:16px;line-height:16px;font-size:13px;color:#333;white-space:nowrap;">15</div>
<div style="position:absolute;left:411px;top:306px;width:81px;text-align:center;height:16px;line-height:16px;font-size:13px;color:#333;white-space:nowrap;">2023-02-16</div>
<div style="position:absolute;left:492px;top:306px;width:81px;text-align:center;height:16px;line-height:16px;font-size:13px;color:#333;white-space:nowrap;">2023-03-02</div>
<svg style="position:absolute;left:886.5px;top:306.5px" width="15" height="15" viewBox="0 0 15 15"><defs><radialGradient id="ga557" cx="0.45" cy="0.3" r="0.75"><stop offset="0" stop-color="#a8dc90"/><stop offset="1" stop-color="#4aa23a"/></radialGradient></defs><circle cx="7.5" cy="7.5" r="7" fill="url(#ga557)" stroke="#3c8c30" stroke-width="0.9"/><circle cx="7.5" cy="7.5" r="5.6" fill="none" stroke="#c8eebc" stroke-width="0.6" opacity="0.8"/><path d="M7.5 3.8 V11.2 M3.8 7.5 H11.2" stroke="#fff" stroke-width="2.6"/></svg>
<svg style="position:absolute;left:914px;top:306px" width="17" height="17" viewBox="0 0 16 16"><g transform="translate(8,8) rotate(-45)"><rect x="-10" y="-2.6" width="3.2" height="5.2" rx="1.6" fill="#c8302a"/><rect x="-7.2" y="-2.6" width="1.6" height="5.2" fill="#e6e6e6" stroke="#999" stroke-width="0.3"/><rect x="-5.6" y="-2.6" width="10" height="5.2" fill="#d8b820"/><rect x="-5.6" y="-2.6" width="10" height="2" fill="#f0dc50"/><path d="M4.4 -2.6 L8.4 -0.8 L8.4 0.8 L4.4 2.6 Z" fill="#f2eadc" stroke="#bbb" stroke-width="0.3"/><path d="M8.4 -0.8 L10 0 L8.4 0.8 Z" fill="#444"/></g></svg>
<svg style="position:absolute;left:942.5px;top:306.5px" width="15" height="15" viewBox="0 0 15 15"><defs><radialGradient id="gr557" cx="0.45" cy="0.3" r="0.75"><stop offset="0" stop-color="#f8a090"/><stop offset="1" stop-color="#de4636"/></radialGradient></defs><circle cx="7.5" cy="7.5" r="7" fill="url(#gr557)" stroke="#c43a2c" stroke-width="0.9"/><circle cx="7.5" cy="7.5" r="5.6" fill="none" stroke="#fbd0c8" stroke-width="0.6" opacity="0.8"/><path d="M4.2 7.5 H10.8" stroke="#fff" stroke-width="2.4"/></svg>
<div style="position:absolute;left:0px;top:330px;width:1597px;height:32px;background:#ffffff;"></div>
<div style="position:absolute;left:0px;top:330px;width:27px;height:32px;background:#efefef;"></div>
<div style="position:absolute;left:0px;top:362px;width:1597px;height:1px;background:#ebf2fd;"></div>
<div style="position:absolute;left:0px;top:339px;width:26px;text-align:center;height:16px;line-height:16px;font-size:13px;color:#444;white-space:nowrap;">11</div>
<div style="position:absolute;left:34px;top:340px;width:13px;height:13px;border:1px solid #1c4f8a;background:linear-gradient(135deg,#dcdcd8,#fbfbfb 70%)"></div>
<svg style="position:absolute;left:70px;top:338px" width="14" height="16" viewBox="0 0 14 16"><path d="M4 0 H10 V9.5 H14 L7 16 L0 9.5 H4 Z" fill="url(#agx)"/><path d="M4 0 H10 V9.5 H14 L7 16 L0 9.5 H4 Z" fill="url(#agy)"/></svg>
<div style="position:absolute;left:97px;top:339px;width:41px;text-align:center;height:16px;line-height:16px;font-size:13px;color:#1e8fd6;white-space:nowrap;">1</div>
<div style="position:absolute;left:175px;top:339px;height:16px;line-height:16px;font-size:13px;color:#222;white-space:nowrap;">地暖工程及净水、软水</div>
<div style="position:absolute;left:320px;top:339px;height:16px;line-height:16px;font-size:13px;color:#333;white-space:nowrap;letter-spacing:-0.3px">刘大同董</div>
<div style="position:absolute;left:370px;top:339px;width:41px;text-align:center;height:16px;line-height:16px;font-size:13px;color:#333;white-space:nowrap;">15</div>
<div style="position:absolute;left:411px;top:339px;width:81px;text-align:center;height:16px;line-height:16px;font-size:13px;color:#333;white-space:nowrap;">2023-02-16</div>
<div style="position:absolute;left:492px;top:339px;width:81px;text-align:center;height:16px;line-height:16px;font-size:13px;color:#333;white-space:nowrap;">2023-03-02</div>
<svg style="position:absolute;left:886px;top:339px" width="17" height="17" viewBox="0 0 17 17"><defs><linearGradient id="gc590" x1="0" y1="0" x2="1" y2="1"><stop offset="0" stop-color="#dce9fa"/><stop offset="1" stop-color="#b8d0f0"/></linearGradient></defs><path d="M1.5 1.5 H7.5 L9.5 3.5 V12.5 H1.5 Z" fill="url(#gc590)" stroke="#4a7fd4" stroke-width="1.2"/><path d="M7.5 5.5 H13 L15.5 8 V16 H7.5 Z" fill="url(#gc590)" stroke="#4a7fd4" stroke-width="1.2"/></svg>
<svg style="position:absolute;left:914px;top:339px" width="17" height="17" viewBox="0 0 16 16"><g transform="translate(8,8) rotate(-45)"><rect x="-10" y="-2.6" width="3.2" height="5.2" rx="1.6" fill="#c8302a"/><rect x="-7.2" y="-2.6" width="1.6" height="5.2" fill="#e6e6e6" stroke="#999" stroke-width="0.3"/><rect x="-5.6" y="-2.6" width="10" height="5.2" fill="#d8b820"/><rect x="-5.6" y="-2.6" width="10" height="2" fill="#f0dc50"/><path d="M4.4 -2.6 L8.4 -0.8 L8.4 0.8 L4.4 2.6 Z" fill="#f2eadc" stroke="#bbb" stroke-width="0.3"/><path d="M8.4 -0.8 L10 0 L8.4 0.8 Z" fill="#444"/></g></svg>
<svg style="position:absolute;left:942.5px;top:339.5px" width="15" height="15" viewBox="0 0 15 15"><defs><radialGradient id="gr590" cx="0.45" cy="0.3" r="0.75"><stop offset="0" stop-color="#f8a090"/><stop offset="1" stop-color="#de4636"/></radialGradient></defs><circle cx="7.5" cy="7.5" r="7" fill="url(#gr590)" stroke="#c43a2c" stroke-width="0.9"/><circle cx="7.5" cy="7.5" r="5.6" fill="none" stroke="#fbd0c8" stroke-width="0.6" opacity="0.8"/><path d="M4.2 7.5 H10.8" stroke="#fff" stroke-width="2.4"/></svg>
<div style="position:absolute;left:0px;top:363px;width:1597px;height:32px;background:#ebf2fd;"></div>
<div style="position:absolute;left:0px;top:363px;width:27px;height:32px;background:#ebf2fd;"></div>
<div style="position:absolute;left:0px;top:395px;width:1597px;height:1px;background:#ebf2fd;"></div>
<div style="position:absolute;left:0px;top:372px;width:26px;text-align:center;height:16px;line-height:16px;font-size:13px;color:#444;white-space:nowrap;">12</div>
<div style="position:absolute;left:34px;top:373px;width:13px;height:13px;border:1px solid #1c4f8a;background:linear-gradient(135deg,#dcdcd8,#fbfbfb 70%)"></div>
<svg style="position:absolute;left:62px;top:371px" width="14" height="16" viewBox="0 0 14 16"><path d="M4 16 H10 V6.5 H14 L7 0 L0 6.5 H4 Z" fill="url(#agx)"/><path d="M4 16 H10 V6.5 H14 L7 0 L0 6.5 H4 Z" fill="url(#agy)"/></svg>
<svg style="position:absolute;left:78px;top:371px" width="14" height="16" viewBox="0 0 14 16"><path d="M4 0 H10 V9.5 H14 L7 16 L0 9.5 H4 Z" fill="url(#agx)"/><path d="M4 0 H10 V9.5 H14 L7 16 L0 9.5 H4 Z" fill="url(#agy)"/></svg>
<div style="position:absolute;left:97px;top:372px;width:41px;text-align:center;height:16px;line-height:16px;font-size:13px;color:#1e8fd6;white-space:nowrap;">6</div>
<div style="position:absolute;left:144px;top:369px;width:9px;height:9px;border:1px solid #4a6aa0;border-radius:1px;background:linear-gradient(#e8f0fb,#b8cbe6)"><div style="position:absolute;left:1px;top:3px;width:5px;height:1px;background:#333"></div></div>
<div style="position:absolute;left:157px;top:372px;height:16px;line-height:16px;font-size:13px;color:#222;white-space:nowrap;">7、室内防水验收</div>
<div style="position:absolute;left:370px;top:372px;width:41px;text-align:center;height:16px;line-height:16px;font-size:13px;color:#333;white-space:nowrap;">37</div>
<div style="position:absolute;left:411px;top:372px;width:81px;text-align:center;height:16px;line-height:16px;font-size:13px;color:#333;white-space:nowrap;">2023-03-03</div>
<div style="position:absolute;left:492px;top:372px;width:81px;text-align:center;height:16px;line-height:16px;font-size:13px;color:#333;white-space:nowrap;">2023-04-08</div>
<svg style="position:absolute;left:886.5px;top:372.5px" width="15" height="15" viewBox="0 0 15 15"><defs><radialGradient id="ga623" cx="0.45" cy="0.3" r="0.75"><stop offset="0" stop-color="#a8dc90"/><stop offset="1" stop-color="#4aa23a"/></radialGradient></defs><circle cx="7.5" cy="7.5" r="7" fill="url(#ga623)" stroke="#3c8c30" stroke-width="0.9"/><circle cx="7.5" cy="7.5" r="5.6" fill="none" stroke="#c8eebc" stroke-width="0.6" opacity="0.8"/><path d="M7.5 3.8 V11.2 M3.8 7.5 H11.2" stroke="#fff" stroke-width="2.6"/></svg>
<svg style="position:absolute;left:914px;top:372px" width="17" height="17" viewBox="0 0 16 16"><g transform="translate(8,8) rotate(-45)"><rect x="-10" y="-2.6" width="3.2" height="5.2" rx="1.6" fill="#c8302a"/><rect x="-7.2" y="-2.6" width="1.6" height="5.2" fill="#e6e6e6" stroke="#999" stroke-width="0.3"/><rect x="-5.6" y="-2.6" width="10" height="5.2" fill="#d8b820"/><rect x="-5.6" y="-2.6" width="10" height="2" fill="#f0dc50"/><path d="M4.4 -2.6 L8.4 -0.8 L8.4 0.8 L4.4 2.6 Z" fill="#f2eadc" stroke="#bbb" stroke-width="0.3"/><path d="M8.4 -0.8 L10 0 L8.4 0.8 Z" fill="#444"/></g></svg>
<svg style="position:absolute;left:942.5px;top:372.5px" width="15" height="15" viewBox="0 0 15 15"><defs><radialGradient id="gr623" cx="0.45" cy="0.3" r="0.75"><stop offset="0" stop-color="#f8a090"/><stop offset="1" stop-color="#de4636"/></radialGradient></defs><circle cx="7.5" cy="7.5" r="7" fill="url(#gr623)" stroke="#c43a2c" stroke-width="0.9"/><circle cx="7.5" cy="7.5" r="5.6" fill="none" stroke="#fbd0c8" stroke-width="0.6" opacity="0.8"/><path d="M4.2 7.5 H10.8" stroke="#fff" stroke-width="2.4"/></svg>
<div style="position:absolute;left:0px;top:396px;width:1597px;height:32px;background:#ffffff;"></div>
<div style="position:absolute;left:0px;top:396px;width:27px;height:32px;background:#efefef;"></div>
<div style="position:absolute;left:0px;top:428px;width:1597px;height:1px;background:#ebf2fd;"></div>
<div style="position:absolute;left:0px;top:405px;width:26px;text-align:center;height:16px;line-height:16px;font-size:13px;color:#444;white-space:nowrap;">13</div>
<div style="position:absolute;left:34px;top:406px;width:13px;height:13px;border:1px solid #1c4f8a;background:linear-gradient(135deg,#dcdcd8,#fbfbfb 70%)"></div>
<svg style="position:absolute;left:70px;top:404px" width="14" height="16" viewBox="0 0 14 16"><path d="M4 0 H10 V9.5 H14 L7 16 L0 9.5 H4 Z" fill="url(#agx)"/><path d="M4 0 H10 V9.5 H14 L7 16 L0 9.5 H4 Z" fill="url(#agy)"/></svg>
<div style="position:absolute;left:97px;top:405px;width:41px;text-align:center;height:16px;line-height:16px;font-size:13px;color:#1e8fd6;white-space:nowrap;">1</div>
<div style="position:absolute;left:175px;top:405px;height:16px;line-height:16px;font-size:13px;color:#222;white-space:nowrap;">室外花园基础</div>
<div style="position:absolute;left:320px;top:405px;height:16px;line-height:16px;font-size:13px;color:#333;white-space:nowrap;letter-spacing:-0.3px">刘大同董</div>
<div style="position:absolute;left:370px;top:405px;width:41px;text-align:center;height:16px;line-height:16px;font-size:13px;color:#333;white-space:nowrap;">30</div>
<div style="position:absolute;left:411px;top:405px;width:81px;text-align:center;height:16px;line-height:16px;font-size:13px;color:#333;white-space:nowrap;">2023-03-03</div>
<div style="position:absolute;left:492px;top:405px;width:81px;text-align:center;height:16px;line-height:16px;font-size:13px;color:#333;white-space:nowrap;">2023-04-01</div>
<svg style="position:absolute;left:886px;top:405px" width="17" height="17" viewBox="0 0 17 17"><defs><linearGradient id="gc656" x1="0" y1="0" x2="1" y2="1"><stop offset="0" stop-color="#dce9fa"/><stop offset="1" stop-color="#b8d0f0"/></linearGradient></defs><path d="M1.5 1.5 H7.5 L9.5 3.5 V12.5 H1.5 Z" fill="url(#gc656)" stroke="#4a7fd4" stroke-width="1.2"/><path d="M7.5 5.5 H13 L15.5 8 V16 H7.5 Z" fill="url(#gc656)" stroke="#4a7fd4" stroke-width="1.2"/></svg>
<svg style="position:absolute;left:914px;top:405px" width="17" height="17" viewBox="0 0 16 16"><g transform="translate(8,8) rotate(-45)"><rect x="-10" y="-2.6" width="3.2" height="5.2" rx="1.6" fill="#c8302a"/><rect x="-7.2" y="-2.6" width="1.6" height="5.2" fill="#e6e6e6" stroke="#999" stroke-width="0.3"/><rect x="-5.6" y="-2.6" width="10" height="5.2" fill="#d8b820"/><rect x="-5.6" y="-2.6" width="10" height="2" fill="#f0dc50"/><path d="M4.4 -2.6 L8.4 -0.8 L8.4 0.8 L4.4 2.6 Z" fill="#f2eadc" stroke="#bbb" stroke-width="0.3"/><path d="M8.4 -0.8 L10 0 L8.4 0.8 Z" fill="#444"/></g></svg>
<svg style="position:absolute;left:942.5px;top:405.5px" width="15" height="15" viewBox="0 0 15 15"><defs><radialGradient id="gr656" cx="0.45" cy="0.3" r="0.75"><stop offset="0" stop-color="#f8a090"/><stop offset="1" stop-color="#de4636"/></radialGradient></defs><circle cx="7.5" cy="7.5" r="7" fill="url(#gr656)" stroke="#c43a2c" stroke-width="0.9"/><circle cx="7.5" cy="7.5" r="5.6" fill="none" stroke="#fbd0c8" stroke-width="0.6" opacity="0.8"/><path d="M4.2 7.5 H10.8" stroke="#fff" stroke-width="2.4"/></svg>
<div style="position:absolute;left:0px;top:429px;width:1597px;height:32px;background:#ebf2fd;"></div>
<div style="position:absolute;left:0px;top:429px;width:27px;height:32px;background:#ebf2fd;"></div>
<div style="position:absolute;left:0px;top:461px;width:1597px;height:1px;background:#ebf2fd;"></div>
<div style="position:absolute;left:0px;top:438px;width:26px;text-align:center;height:16px;line-height:16px;font-size:13px;color:#444;white-space:nowrap;">14</div>
<div style="position:absolute;left:34px;top:439px;width:13px;height:13px;border:1px solid #1c4f8a;background:linear-gradient(135deg,#dcdcd8,#fbfbfb 70%)"></div>
<svg style="position:absolute;left:62px;top:437px" width="14" height="16" viewBox="0 0 14 16"><path d="M4 16 H10 V6.5 H14 L7 0 L0 6.5 H4 Z" fill="url(#agx)"/><path d="M4 16 H10 V6.5 H14 L7 0 L0 6.5 H4 Z" fill="url(#agy)"/></svg>
<svg style="position:absolute;left:78px;top:437px" width="14" height="16" viewBox="0 0 14 16"><path d="M4 0 H10 V9.5 H14 L7 16 L0 9.5 H4 Z" fill="url(#agx)"/><path d="M4 0 H10 V9.5 H14 L7 16 L0 9.5 H4 Z" fill="url(#agy)"/></svg>
<div style="position:absolute;left:97px;top:438px;width:41px;text-align:center;height:16px;line-height:16px;font-size:13px;color:#1e8fd6;white-space:nowrap;">2</div>
<div style="position:absolute;left:175px;top:438px;height:16px;line-height:16px;font-size:13px;color:#222;white-space:nowrap;">室内防水工程</div>
<div style="position:absolute;left:320px;top:438px;height:16px;line-height:16px;font-size:13px;color:#333;white-space:nowrap;letter-spacing:-0.3px">刘大同董</div>
<div style="position:absolute;left:370px;top:438px;width:41px;text-align:center;height:16px;line-height:16px;font-size:13px;color:#333;white-space:nowrap;">7</div>
<div style="position:absolute;left:411px;top:438px;width:81px;text-align:center;height:16px;line-height:16px;font-size:13px;color:#333;white-space:nowrap;">2023-04-02</div>
<div style="position:absolute;left:492px;top:438px;width:81px;text-align:center;height:16px;line-height:16px;font-size:13px;color:#333;white-space:nowrap;">2023-04-08</div>
<svg style="position:absolute;left:886px;top:438px" width="17" height="17" viewBox="0 0 17 17"><defs><linearGradient id="gc689" x1="0" y1="0" x2="1" y2="1"><stop offset="0" stop-color="#dce9fa"/><stop offset="1" stop-color="#b8d0f0"/></linearGradient></defs><path d="M1.5 1.5 H7.5 L9.5 3.5 V12.5 H1.5 Z" fill="url(#gc689)" stroke="#4a7fd4" stroke-width="1.2"/><path d="M7.5 5.5 H13 L15.5 8 V16 H7.5 Z" fill="url(#gc689)" stroke="#4a7fd4" stroke-width="1.2"/></svg>
<svg style="position:absolute;left:914px;top:438px" width="17" height="17" viewBox="0 0 16 16"><g transform="translate(8,8) rotate(-45)"><rect x="-10" y="-2.6" width="3.2" height="5.2" rx="1.6" fill="#c8302a"/><rect x="-7.2" y="-2.6" width="1.6" height="5.2" fill="#e6e6e6" stroke="#999" stroke-width="0.3"/><rect x="-5.6" y="-2.6" width="10" height="5.2" fill="#d8b820"/><rect x="-5.6" y="-2.6" width="10" height="2" fill="#f0dc50"/><path d="M4.4 -2.6 L8.4 -0.8 L8.4 0.8 L4.4 2.6 Z" fill="#f2eadc" stroke="#bbb" stroke-width="0.3"/><path d="M8.4 -0.8 L10 0 L8.4 0.8 Z" fill="#444"/></g></svg>
<svg style="position:absolute;left:942.5px;top:438.5px" width="15" height="15" viewBox="0 0 15 15"><defs><radialGradient id="gr689" cx="0.45" cy="0.3" r="0.75"><stop offset="0" stop-color="#f8a090"/><stop offset="1" stop-color="#de4636"/></radialGradient></defs><circle cx="7.5" cy="7.5" r="7" fill="url(#gr689)" stroke="#c43a2c" stroke-width="0.9"/><circle cx="7.5" cy="7.5" r="5.6" fill="none" stroke="#fbd0c8" stroke-width="0.6" opacity="0.8"/><path d="M4.2 7.5 H10.8" stroke="#fff" stroke-width="2.4"/></svg>
<div style="position:absolute;left:0px;top:462px;width:1597px;height:32px;background:#ffffff;"></div>
<div style="position:absolute;left:0px;top:462px;width:27px;height:32px;background:#efefef;"></div>
<div style="position:absolute;left:0px;top:494px;width:1597px;height:1px;background:#ebf2fd;"></div>
<div style="position:absolute;left:0px;top:471px;width:26px;text-align:center;height:16px;line-height:16px;font-size:13px;color:#444;white-space:nowrap;">15</div>
<div style="position:absolute;left:34px;top:472px;width:13px;height:13px;border:1px solid #1c4f8a;background:linear-gradient(135deg,#dcdcd8,#fbfbfb 70%)"></div>
<svg style="position:absolute;left:62px;top:470px" width="14" height="16" viewBox="0 0 14 16"><path d="M4 16 H10 V6.5 H14 L7 0 L0 6.5 H4 Z" fill="url(#agx)"/><path d="M4 16 H10 V6.5 H14 L7 0 L0 6.5 H4 Z" fill="url(#agy)"/></svg>
<svg style="position:absolute;left:78px;top:470px" width="14" height="16" viewBox="0 0 14 16"><path d="M4 0 H10 V9.5 H14 L7 16 L0 9.5 H4 Z" fill="url(#agx)"/><path d="M4 0 H10 V9.5 H14 L7 16 L0 9.5 H4 Z" fill="url(#agy)"/></svg>
<div style="position:absolute;left:97px;top:471px;width:41px;text-align:center;height:16px;line-height:16px;font-size:13px;color:#1e8fd6;white-space:nowrap;">7</div>
<div style="position:absolute;left:144px;top:468px;width:9px;height:9px;border:1px solid #4a6aa0;border-radius:1px;background:linear-gradient(#e8f0fb,#b8cbe6)"><div style="position:absolute;left:1px;top:3px;width:5px;height:1px;background:#333"></div></div>
<div style="position:absolute;left:157px;top:471px;height:16px;line-height:16px;font-size:13px;color:#222;white-space:nowrap;">8、墙地砖验收</div>
<div style="position:absolute;left:370px;top:471px;width:41px;text-align:center;height:16px;line-height:16px;font-size:13px;color:#333;white-space:nowrap;">16</div>
<div style="position:absolute;left:411px;top:471px;width:81px;text-align:center;height:16px;line-height:16px;font-size:13px;color:#333;white-space:nowrap;">2023-04-09</div>
<div style="position:absolute;left:492px;top:471px;width:81px;text-align:center;height:16px;line-height:16px;font-size:13px;color:#333;white-space:nowrap;">2023-04-24</div>
<svg style="position:absolute;left:886.5px;top:471.5px" width="15" height="15" viewBox="0 0 15 15"><defs><radialGradient id="ga722" cx="0.45" cy="0.3" r="0.75"><stop offset="0" stop-color="#a8dc90"/><stop offset="1" stop-color="#4aa23a"/></radialGradient></defs><circle cx="7.5" cy="7.5" r="7" fill="url(#ga722)" stroke="#3c8c30" stroke-width="0.9"/><circle cx="7.5" cy="7.5" r="5.6" fill="none" stroke="#c8eebc" stroke-width="0.6" opacity="0.8"/><path d="M7.5 3.8 V11.2 M3.8 7.5 H11.2" stroke="#fff" stroke-width="2.6"/></svg>
<svg style="position:absolute;left:914px;top:471px" width="17" height="17" viewBox="0 0 16 16"><g transform="translate(8,8) rotate(-45)"><rect x="-10" y="-2.6" width="3.2" height="5.2" rx="1.6" fill="#c8302a"/><rect x="-7.2" y="-2.6" width="1.6" height="5.2" fill="#e6e6e6" stroke="#999" stroke-width="0.3"/><rect x="-5.6" y="-2.6" width="10" height="5.2" fill="#d8b820"/><rect x="-5.6" y="-2.6" width="10" height="2" fill="#f0dc50"/><path d="M4.4 -2.6 L8.4 -0.8 L8.4 0.8 L4.4 2.6 Z" fill="#f2eadc" stroke="#bbb" stroke-width="0.3"/><path d="M8.4 -0.8 L10 0 L8.4 0.8 Z" fill="#444"/></g></svg>
<svg style="position:absolute;left:942.5px;top:471.5px" width="15" height="15" viewBox="0 0 15 15"><defs><radialGradient id="gr722" cx="0.45" cy="0.3" r="0.75"><stop offset="0" stop-color="#f8a090"/><stop offset="1" stop-color="#de4636"/></radialGradient></defs><circle cx="7.5" cy="7.5" r="7" fill="url(#gr722)" stroke="#c43a2c" stroke-width="0.9"/><circle cx="7.5" cy="7.5" r="5.6" fill="none" stroke="#fbd0c8" stroke-width="0.6" opacity="0.8"/><path d="M4.2 7.5 H10.8" stroke="#fff" stroke-width="2.4"/></svg>
<div style="position:absolute;left:0px;top:495px;width:1597px;height:32px;background:#ebf2fd;"></div>
<div style="position:absolute;left:0px;top:495px;width:27px;height:32px;background:#ebf2fd;"></div>
<div style="position:absolute;left:0px;top:527px;width:1597px;height:1px;background:#ebf2fd;"></div>
<div style="position:absolute;left:0px;top:504px;width:26px;text-align:center;height:16px;line-height:16px;font-size:13px;color:#444;white-space:nowrap;">16</div>
<div style="position:absolute;left:34px;top:505px;width:13px;height:13px;border:1px solid #1c4f8a;background:linear-gradient(135deg,#dcdcd8,#fbfbfb 70%)"></div>
<svg style="position:absolute;left:70px;top:503px" width="14" height="16" viewBox="0 0 14 16"><path d="M4 0 H10 V9.5 H14 L7 16 L0 9.5 H4 Z" fill="url(#agx)"/><path d="M4 0 H10 V9.5 H14 L7 16 L0 9.5 H4 Z" fill="url(#agy)"/></svg>
<div style="position:absolute;left:97px;top:504px;width:41px;text-align:center;height:16px;line-height:16px;font-size:13px;color:#1e8fd6;white-space:nowrap;">1</div>
<div style="position:absolute;left:175px;top:504px;height:16px;line-height:16px;font-size:13px;color:#222;white-space:nowrap;">瓷砖铺贴</div>
<div style="position:absolute;left:320px;top:504px;height:16px;line-height:16px;font-size:13px;color:#333;white-space:nowrap;letter-spacing:-0.3px">刘大同董</div>
<div style="position:absolute;left:370px;top:504px;width:41px;text-align:center;height:16px;line-height:16px;font-size:13px;color:#333;white-space:nowrap;">16</div>
<div style="position:absolute;left:411px;top:504px;width:81px;text-align:center;height:16px;line-height:16px;font-size:13px;color:#333;white-space:nowrap;">2023-04-09</div>
<div style="position:absolute;left:492px;top:504px;width:81px;text-align:center;height:16px;line-height:16px;font-size:13px;color:#333;white-space:nowrap;">2023-04-24</div>
<svg style="position:absolute;left:886px;top:504px" width="17" height="17" viewBox="0 0 17 17"><defs><linearGradient id="gc755" x1="0" y1="0" x2="1" y2="1"><stop offset="0" stop-color="#dce9fa"/><stop offset="1" stop-color="#b8d0f0"/></linearGradient></defs><path d="M1.5 1.5 H7.5 L9.5 3.5 V12.5 H1.5 Z" fill="url(#gc755)" stroke="#4a7fd4" stroke-width="1.2"/><path d="M7.5 5.5 H13 L15.5 8 V16 H7.5 Z" fill="url(#gc755)" stroke="#4a7fd4" stroke-width="1.2"/></svg>
<svg style="position:absolute;left:914px;top:504px" width="17" height="17" viewBox="0 0 16 16"><g transform="translate(8,8) rotate(-45)"><rect x="-10" y="-2.6" width="3.2" height="5.2" rx="1.6" fill="#c8302a"/><rect x="-7.2" y="-2.6" width="1.6" height="5.2" fill="#e6e6e6" stroke="#999" stroke-width="0.3"/><rect x="-5.6" y="-2.6" width="10" height="5.2" fill="#d8b820"/><rect x="-5.6" y="-2.6" width="10" height="2" fill="#f0dc50"/><path d="M4.4 -2.6 L8.4 -0.8 L8.4 0.8 L4.4 2.6 Z" fill="#f2eadc" stroke="#bbb" stroke-width="0.3"/><path d="M8.4 -0.8 L10 0 L8.4 0.8 Z" fill="#444"/></g></svg>
<svg style="position:absolute;left:942.5px;top:504.5px" width="15" height="15" viewBox="0 0 15 15"><defs><radialGradient id="gr755" cx="0.45" cy="0.3" r="0.75"><stop offset="0" stop-color="#f8a090"/><stop offset="1" stop-color="#de4636"/></radialGradient></defs><circle cx="7.5" cy="7.5" r="7" fill="url(#gr755)" stroke="#c43a2c" stroke-width="0.9"/><circle cx="7.5" cy="7.5" r="5.6" fill="none" stroke="#fbd0c8" stroke-width="0.6" opacity="0.8"/><path d="M4.2 7.5 H10.8" stroke="#fff" stroke-width="2.4"/></svg>
<div style="position:absolute;left:0px;top:528px;width:1597px;height:32px;background:#ffffff;"></div>
<div style="position:absolute;left:0px;top:528px;width:27px;height:32px;background:#efefef;"></div>
<div style="position:absolute;left:0px;top:560px;width:1597px;height:1px;background:#ebf2fd;"></div>
<div style="position:absolute;left:0px;top:537px;width:26px;text-align:center;height:16px;line-height:16px;font-size:13px;color:#444;white-space:nowrap;">17</div>
<div style="position:absolute;left:34px;top:538px;width:13px;height:13px;border:1px solid #1c4f8a;background:linear-gradient(135deg,#dcdcd8,#fbfbfb 70%)"></div>
<svg style="position:absolute;left:62px;top:536px" width="14" height="16" viewBox="0 0 14 16"><path d="M4 16 H10 V6.5 H14 L7 0 L0 6.5 H4 Z" fill="url(#agx)"/><path d="M4 16 H10 V6.5 H14 L7 0 L0 6.5 H4 Z" fill="url(#agy)"/></svg>
<svg style="position:absolute;left:78px;top:536px" width="14" height="16" viewBox="0 0 14 16"><path d="M4 0 H10 V9.5 H14 L7 16 L0 9.5 H4 Z" fill="url(#agx)"/><path d="M4 0 H10 V9.5 H14 L7 16 L0 9.5 H4 Z" fill="url(#agy)"/></svg>
<div style="position:absolute;left:97px;top:537px;width:41px;text-align:center;height:16px;line-height:16px;font-size:13px;color:#1e8fd6;white-space:nowrap;">8</div>
<div style="position:absolute;left:144px;top:534px;width:9px;height:9px;border:1px solid #4a6aa0;border-radius:1px;background:linear-gradient(#e8f0fb,#b8cbe6)"><div style="position:absolute;left:1px;top:3px;width:5px;height:1px;background:#333"></div></div>
<div style="position:absolute;left:157px;top:537px;height:16px;line-height:16px;font-size:13px;color:#222;white-space:nowrap;">9、木作及基层吊顶验收</div>
<div style="position:absolute;left:370px;top:537px;width:41px;text-align:center;height:16px;line-height:16px;font-size:13px;color:#333;white-space:nowrap;">14</div>
<div style="position:absolute;left:411px;top:537px;width:81px;text-align:center;height:16px;line-height:16px;font-size:13px;color:#333;white-space:nowrap;">2023-04-25</div>
<div style="position:absolute;left:492px;top:537px;width:81px;text-align:center;height:16px;line-height:16px;font-size:13px;color:#333;white-space:nowrap;">2023-05-08</div>
<svg style="position:absolute;left:886.5px;top:537.5px" width="15" height="15" viewBox="0 0 15 15"><defs><radialGradient id="ga788" cx="0.45" cy="0.3" r="0.75"><stop offset="0" stop-color="#a8dc90"/><stop offset="1" stop-color="#4aa23a"/></radialGradient></defs><circle cx="7.5" cy="7.5" r="7" fill="url(#ga788)" stroke="#3c8c30" stroke-width="0.9"/><circle cx="7.5" cy="7.5" r="5.6" fill="none" stroke="#c8eebc" stroke-width="0.6" opacity="0.8"/><path d="M7.5 3.8 V11.2 M3.8 7.5 H11.2" stroke="#fff" stroke-width="2.6"/></svg>
<svg style="position:absolute;left:914px;top:537px" width="17" height="17" viewBox="0 0 16 16"><g transform="translate(8,8) rotate(-45)"><rect x="-10" y="-2.6" width="3.2" height="5.2" rx="1.6" fill="#c8302a"/><rect x="-7.2" y="-2.6" width="1.6" height="5.2" fill="#e6e6e6" stroke="#999" stroke-width="0.3"/><rect x="-5.6" y="-2.6" width="10" height="5.2" fill="#d8b820"/><rect x="-5.6" y="-2.6" width="10" height="2" fill="#f0dc50"/><path d="M4.4 -2.6 L8.4 -0.8 L8.4 0.8 L4.4 2.6 Z" fill="#f2eadc" stroke="#bbb" stroke-width="0.3"/><path d="M8.4 -0.8 L10 0 L8.4 0.8 Z" fill="#444"/></g></svg>
<svg style="position:absolute;left:942.5px;top:537.5px" width="15" height="15" viewBox="0 0 15 15"><defs><radialGradient id="gr788" cx="0.45" cy="0.3" r="0.75"><stop offset="0" stop-color="#f8a090"/><stop offset="1" stop-color="#de4636"/></radialGradient></defs><circle cx="7.5" cy="7.5" r="7" fill="url(#gr788)" stroke="#c43a2c" stroke-width="0.9"/><circle cx="7.5" cy="7.5" r="5.6" fill="none" stroke="#fbd0c8" stroke-width="0.6" opacity="0.8"/><path d="M4.2 7.5 H10.8" stroke="#fff" stroke-width="2.4"/></svg>
<div style="position:absolute;left:26px;top:0px;width:1px;height:600px;background:#ededed;"></div>
<div style="position:absolute;left:56px;top:0px;width:1px;height:600px;background:#ededed;"></div>
<div style="position:absolute;left:97px;top:0px;width:1px;height:600px;background:#ededed;"></div>
<div style="position:absolute;left:138px;top:0px;width:1px;height:600px;background:#ededed;"></div>
<div style="position:absolute;left:319px;top:0px;width:1px;height:600px;background:#ededed;"></div>
<div style="position:absolute;left:370px;top:0px;width:1px;height:600px;background:#ededed;"></div>
<div style="position:absolute;left:411px;top:0px;width:1px;height:600px;background:#ededed;"></div>
<div style="position:absolute;left:492px;top:0px;width:1px;height:600px;background:#ededed;"></div>
<div style="position:absolute;left:573px;top:0px;width:1px;height:600px;background:#ededed;"></div>
<div style="position:absolute;left:734px;top:0px;width:1px;height:600px;background:#ededed;"></div>
<div style="position:absolute;left:815px;top:0px;width:1px;height:600px;background:#ededed;"></div>
<div style="position:absolute;left:866px;top:0px;width:1px;height:600px;background:#ededed;"></div>
<div style="position:absolute;left:977px;top:0px;width:1px;height:600px;background:#ededed;"></div>
<div style="position:absolute;left:1010px;top:0px;width:1px;height:600px;background:#eeeeee;"></div>
<div style="position:absolute;left:1043px;top:0px;width:1px;height:600px;background:#eeeeee;"></div>
<div style="position:absolute;left:1076px;top:0px;width:1px;height:600px;background:#eeeeee;"></div>
<div style="position:absolute;left:1109px;top:0px;width:1px;height:600px;background:#eeeeee;"></div>
<div style="position:absolute;left:1142px;top:0px;width:1px;height:600px;background:#eeeeee;"></div>
<div style="position:absolute;left:1175px;top:0px;width:1px;height:600px;background:#eeeeee;"></div>
<div style="position:absolute;left:1208px;top:0px;width:1px;height:600px;background:#eeeeee;"></div>
<div style="position:absolute;left:1241px;top:0px;width:1px;height:600px;background:#eeeeee;"></div>
<div style="position:absolute;left:1274px;top:0px;width:1px;height:600px;background:#eeeeee;"></div>
<div style="position:absolute;left:1307px;top:0px;width:1px;height:600px;background:#eeeeee;"></div>
<div style="position:absolute;left:1340px;top:0px;width:1px;height:600px;background:#eeeeee;"></div>
<div style="position:absolute;left:1373px;top:0px;width:1px;height:600px;background:#eeeeee;"></div>
<div style="position:absolute;left:1406px;top:0px;width:1px;height:600px;background:#eeeeee;"></div>
<div style="position:absolute;left:1439px;top:0px;width:1px;height:600px;background:#eeeeee;"></div>
<div style="position:absolute;left:1472px;top:0px;width:1px;height:600px;background:#eeeeee;"></div>
<div style="position:absolute;left:1505px;top:0px;width:1px;height:600px;background:#eeeeee;"></div>
<div style="position:absolute;left:1538px;top:0px;width:1px;height:600px;background:#eeeeee;"></div>
<div style="position:absolute;left:1571px;top:0px;width:1px;height:600px;background:#eeeeee;"></div>
<div style="position:absolute;left:1604px;top:0px;width:1px;height:600px;background:#eeeeee;"></div>
</div>
<div style="position:absolute;left:1229px;top:800px;width:619px;height:15px;background:#f0f0f0;"></div>
<div style="position:absolute;left:1246px;top:802px;width:69px;height:13px;background:#c1c1c1;"></div>
<svg style="position:absolute;left:1235px;top:804px" width="5" height="8"><path d="M5 0 V8 L0 4 Z" fill="#a3a3a3"/></svg>
<svg style="position:absolute;left:1838px;top:804px" width="5" height="8"><path d="M0 0 V8 L5 4 Z" fill="#505050"/></svg>
<div style="position:absolute;left:1848px;top:243px;width:17px;height:557px;background:#f0f0f0;"></div>
<div style="position:absolute;left:1850px;top:260px;width:13px;height:465px;background:#c1c1c1;"></div>
<svg style="position:absolute;left:1852px;top:251px" width="9" height="5"><path d="M0 5 L4.5 0 L9 5 Z" fill="#a3a3a3"/></svg>
<svg style="position:absolute;left:1852px;top:787px" width="9" height="5"><path d="M0 0 L4.5 5 L9 0 Z" fill="#505050"/></svg>
<div style="position:absolute;left:1848px;top:800px;width:17px;height:15px;background:#dcdcdc;"></div>
<div style="position:absolute;left:251px;top:815px;width:1614px;height:1px;background:#dedede;"></div>
<div style="position:absolute;left:251px;top:816px;width:1614px;height:31px;background:linear-gradient(#ffffff,#f0f0f0);"></div>
<div style="position:absolute;left:256px;top:820px;width:48px;height:20px;border:1px solid #555;border-radius:2px;background:#fff;font-size:14px;line-height:18px;padding-left:4px;color:#111">200</div>
<svg style="position:absolute;left:290px;top:826px" width="9" height="6"><path d="M1 1 L4.5 4.5 L8 1" stroke="#111" stroke-width="1.6" fill="none"/></svg>
<div style="position:absolute;left:311px;top:828px;width:1px;height:12px;background:#d0d0d0;"></div>
<div style="position:absolute;left:371px;top:828px;width:1px;height:12px;background:#d0d0d0;"></div>
<div style="position:absolute;left:433px;top:828px;width:1px;height:12px;background:#d0d0d0;"></div>
<div style="position:absolute;left:493px;top:828px;width:1px;height:12px;background:#d0d0d0;"></div>
<div style="position:absolute;left:531px;top:828px;width:1px;height:12px;background:#d0d0d0;"></div>
<svg style="position:absolute;left:325px;top:827px" width="10" height="11"><rect x="0" y="0" width="2" height="11" fill="#7b9ad0"/><path d="M10 0 V11 L3 5.5 Z" fill="#7b9ad0"/></svg>
<svg style="position:absolute;left:347px;top:828px" width="7" height="10"><path d="M7 0 V10 L0 5 Z" fill="#7b9ad0"/></svg>
<div style="position:absolute;left:380px;top:823px;width:24px;height:21px;border:1px solid #777;border-radius:2px;background:#fff;font-size:14px;line-height:21px;padding-left:2px;color:#222">1</div>
<div style="position:absolute;left:408px;top:826.0px;height:16px;line-height:16px;font-size:14px;color:#333;font-weight:normal;white-space:nowrap;">/ 1</div>
<svg style="position:absolute;left:449px;top:828px" width="7" height="10"><path d="M0 0 V10 L7 5 Z" fill="#7b9ad0"/></svg>
<svg style="position:absolute;left:469px;top:827px" width="10" height="11"><path d="M0 0 V11 L7 5.5 Z" fill="#7b9ad0"/><rect x="8" y="0" width="2" height="11" fill="#7b9ad0"/></svg>
<svg style="position:absolute;left:504px;top:825px" width="16" height="15" viewBox="0 0 16 15"><path d="M2 6 Q4 1 9 1.5 Q12 2 13 4" stroke="#4aa83a" stroke-width="2.6" fill="none"/><path d="M15.5 1 L15 7 L10 5 Z" fill="#4aa83a"/><path d="M14 9 Q12 14 7 13.5 Q4 13 3 11" stroke="#4aa83a" stroke-width="2.6" fill="none"/><path d="M0.5 14 L1 8 L6 10 Z" fill="#4aa83a"/></svg>
<div style="position:absolute;right:61px;top:821.0px;height:16px;line-height:16px;font-size:13px;color:#333;font-weight:normal;white-space:nowrap;">显示从<span style="font-size:14px">1</span>到<span style="font-size:14px">8</span>，总 <span style="font-size:14px">8</span> 条 。每页显示：<span style="font-size:14px">200</span></div>
</div></body></html>
